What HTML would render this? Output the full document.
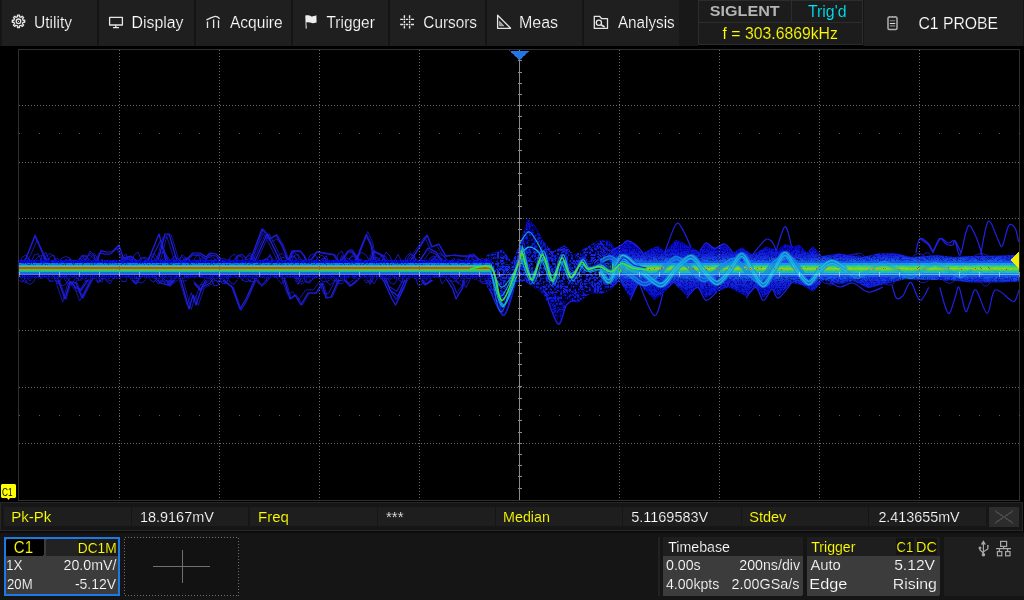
<!DOCTYPE html>
<html><head><meta charset="utf-8"><style>
html,body{margin:0;padding:0;width:1024px;height:600px;overflow:hidden;background:#000}
svg{display:block}
text{font-family:"Liberation Sans",sans-serif}
</style></head><body>
<svg width="1024" height="600" viewBox="0 0 1024 600" shape-rendering="crispEdges">
<rect x="0" y="0" width="1024" height="600" fill="#000" />
<rect x="0" y="0" width="698" height="46" fill="#151515" />
<rect x="2" y="0" width="95" height="46" fill="#1f1f1f" />
<text x="34.03" y="28" font-size="16" fill="#ffffff" text-anchor="start" font-weight="normal" stroke="#1f1f1f" stroke-width="0.2" textLength="38.08" lengthAdjust="spacingAndGlyphs" >Utility</text>
<rect x="99" y="0" width="95" height="46" fill="#1f1f1f" />
<text x="131.51" y="28" font-size="16" fill="#ffffff" text-anchor="start" font-weight="normal" stroke="#1f1f1f" stroke-width="0.2" textLength="51.96" lengthAdjust="spacingAndGlyphs" >Display</text>
<rect x="196" y="0" width="95" height="46" fill="#1f1f1f" />
<text x="230.0" y="28" font-size="16" fill="#ffffff" text-anchor="start" font-weight="normal" stroke="#1f1f1f" stroke-width="0.2" textLength="52.64" lengthAdjust="spacingAndGlyphs" >Acquire</text>
<rect x="293" y="0" width="95" height="46" fill="#1f1f1f" />
<text x="326.5" y="28" font-size="16" fill="#ffffff" text-anchor="start" font-weight="normal" stroke="#1f1f1f" stroke-width="0.2" textLength="48.29" lengthAdjust="spacingAndGlyphs" >Trigger</text>
<rect x="390" y="0" width="95" height="46" fill="#1f1f1f" />
<text x="423.3" y="28" font-size="16" fill="#ffffff" text-anchor="start" font-weight="normal" stroke="#1f1f1f" stroke-width="0.2" textLength="53.71" lengthAdjust="spacingAndGlyphs" >Cursors</text>
<rect x="487" y="0" width="95" height="46" fill="#1f1f1f" />
<text x="519.0" y="28" font-size="16" fill="#ffffff" text-anchor="start" font-weight="normal" stroke="#1f1f1f" stroke-width="0.2" textLength="39.12" lengthAdjust="spacingAndGlyphs" >Meas</text>
<rect x="584" y="0" width="95" height="46" fill="#1f1f1f" />
<text x="617.9" y="28" font-size="16" fill="#ffffff" text-anchor="start" font-weight="normal" stroke="#1f1f1f" stroke-width="0.2" textLength="56.85" lengthAdjust="spacingAndGlyphs" >Analysis</text>
<rect x="679" y="0" width="19" height="46" fill="#181818" />
<rect x="698" y="0" width="165" height="45" fill="#2c2c2c" />
<rect x="699" y="1" width="92" height="21" fill="#1c1c1c" />
<rect x="792" y="1" width="70" height="21" fill="#1c1c1c" />
<rect x="699" y="23" width="163" height="21" fill="#1c1c1c" />
<text x="709.8" y="16" font-size="15" fill="#b4b4b4" text-anchor="start" font-weight="bold"  textLength="69.82" lengthAdjust="spacingAndGlyphs" >SIGLENT</text>
<text x="808.0" y="17" font-size="16" fill="#00e8f8" text-anchor="start" font-weight="normal" stroke="#1c1c1c" stroke-width="0.15" textLength="38.51" lengthAdjust="spacingAndGlyphs" >Trig'd</text>
<text x="722.6" y="38.5" font-size="15.7" fill="#ffff00" text-anchor="start" font-weight="normal" stroke="#1c1c1c" stroke-width="0.15" textLength="115.29" lengthAdjust="spacingAndGlyphs" >f = 303.6869kHz</text>
<rect x="863" y="0" width="161" height="46" fill="#151515" />
<rect x="864" y="0" width="159" height="46" fill="#1f1f1f" />
<text x="918.5" y="29" font-size="16" fill="#ffffff" text-anchor="start" font-weight="normal" stroke="#1f1f1f" stroke-width="0.2" textLength="79.62" lengthAdjust="spacingAndGlyphs" >C1 PROBE</text>
<g shape-rendering="auto" fill="none" stroke="#e6e6e6" stroke-width="1.3" stroke-linejoin="round">
<path d="M23.10,20.34 L24.71,20.27 L24.71,22.33 L23.10,22.26 L22.43,23.87 L23.63,24.96 L22.16,26.43 L21.07,25.23 L19.46,25.90 L19.53,27.51 L17.47,27.51 L17.54,25.90 L15.93,25.23 L14.84,26.43 L13.37,24.96 L14.57,23.87 L13.90,22.26 L12.29,22.33 L12.29,20.27 L13.90,20.34 L14.57,18.73 L13.37,17.64 L14.84,16.17 L15.93,17.37 L17.54,16.70 L17.47,15.09 L19.53,15.09 L19.46,16.70 L21.07,17.37 L22.16,16.17 L23.63,17.64 L22.43,18.73Z"/>
<circle cx="18.5" cy="21.3" r="2.3"/>
<circle cx="18.5" cy="21.3" r="0.6" fill="#e6e6e6" stroke="none"/>
<rect x="109.6" y="17.4" width="12.8" height="7.6"/>
<path d="M115.8 25.2 V27.4 M113 27.6 H119" stroke-width="1.4"/>
<path d="M206.4 19.8 C210 18.8 213 16.2 215.6 16.3 C217.4 16.4 218.8 17.6 219.6 18.9"/>
<path d="M207.5 21.5 V28 M213.6 19.5 V28 M218.5 20.3 V28"/>
<path d="M305.3 15.6 C308 15 309.5 15.6 311 16.2 C312.5 16.8 314 16 316.4 15.3 L316.6 22.4 C314 23.2 312.5 23.6 311 22.8 C309.5 22.1 308 22 306.3 22.6 L306.8 28.4 L305.7 28.5 Z" fill="#eeeeee" stroke="none"/>
<path d="M404.4 15.2 V18.2 M404.4 18.9 V19.9 M404.4 20.8 V23.1 M404.4 24.0 V25.0 M404.4 25.8 V28.6 M409.6 15.2 V18.2 M409.6 18.9 V19.9 M409.6 20.8 V23.1 M409.6 24.0 V25.0 M409.6 25.8 V28.6 M400.2 19.4 H403.2 M403.9 19.4 H404.9 M405.8 19.4 H408.2 M409.1 19.4 H410.1 M411 19.4 H414 M400.2 24.5 H403.2 M403.9 24.5 H404.9 M405.8 24.5 H408.2 M409.1 24.5 H410.1 M411 24.5 H414 " stroke-width="1.4"/>
<path d="M497.6 15.3 V28.3 H510.6 Z"/>
<path d="M499.6 21.3 V25.8 H503.8 Z" fill="#9a9a9a" stroke="#bbbbbb" stroke-width="0.8"/>
<path d="M594.3 16.3 H599.5 L601.7 18.7 H607.5 V28.4 H594.3 Z"/>
<circle cx="598.9" cy="22.8" r="2.6"/>
<path d="M601 24.8 L604.6 27" stroke-width="1.6"/>
<rect x="888" y="17.1" width="9" height="12.3" rx="1.2" stroke="#b0b0b0" stroke-width="1.5"/>
<path d="M889.8 20.8 H895.2 M889.8 25.9 H895.2" stroke="#888" stroke-width="1.1"/>
<path d="M889.8 23.5 H895.2" stroke="#ddd" stroke-width="1.1"/>
<path d="M889.5 16.5 v0.6 M892.5 16.3 v0.8 M895.4 16.5 v0.6" stroke="#ccc" stroke-width="1"/>
</g>
<defs><linearGradient id="envg" gradientUnits="userSpaceOnUse" x1="0" y1="240" x2="0" y2="300"><stop offset="0.117" stop-color="#0a0ac8"/><stop offset="0.267" stop-color="#1424e0"/><stop offset="0.35" stop-color="#2060f0"/><stop offset="0.383" stop-color="#10b0e0"/><stop offset="0.425" stop-color="#30c8a0"/><stop offset="0.442" stop-color="#40d040"/><stop offset="0.458" stop-color="#90c818"/><stop offset="0.475" stop-color="#d09010"/><stop offset="0.492" stop-color="#80c820"/><stop offset="0.517" stop-color="#30d040"/><stop offset="0.55" stop-color="#10b0e0"/><stop offset="0.617" stop-color="#1a60ee"/><stop offset="0.70" stop-color="#1424e0"/><stop offset="1" stop-color="#0a0ac0"/></linearGradient><filter id="mott" x="0" y="0" width="1" height="1"><feTurbulence type="turbulence" baseFrequency="0.45" numOctaves="1" seed="3" result="n"/><feColorMatrix in="n" type="matrix" values="0 0 0 0 0  0 0 0 0 0  0 0 0 0 0  0 0 0 -6 0.8" result="m"/><feComposite in="m" in2="SourceGraphic" operator="in" result="mm"/><feMerge><feMergeNode in="SourceGraphic"/><feMergeNode in="mm"/></feMerge></filter><filter id="mott2" x="0" y="0" width="1" height="1"><feTurbulence type="turbulence" baseFrequency="0.35" numOctaves="1" seed="9" result="n"/><feColorMatrix in="n" type="matrix" values="0 0 0 0 0  0 0 0 0 0  0 0 0 0 0  0 0 0 -5 1.3" result="m"/><feComposite in="m" in2="SourceGraphic" operator="in" result="mm"/><feMerge><feMergeNode in="SourceGraphic"/><feMergeNode in="mm"/></feMerge></filter><filter id="holes" x="0" y="0" width="1" height="1"><feTurbulence type="turbulence" baseFrequency="0.5" numOctaves="1" seed="7" result="n"/><feColorMatrix in="n" type="matrix" values="0 0 0 0 0  0 0 0 0 0  0 0 0 0 0  0 0 0 -10 0.7"/></filter></defs>
<g shape-rendering="auto">
<defs><clipPath id="cA"><rect x="0" y="0" width="612" height="600"/></clipPath><clipPath id="cB"><rect x="612" y="0" width="500" height="600"/></clipPath><linearGradient id="envb" gradientUnits="userSpaceOnUse" x1="0" y1="220" x2="0" y2="320"><stop offset="0" stop-color="#0a0ac8"/><stop offset="0.5" stop-color="#1830e8"/><stop offset="1" stop-color="#0a0ac8"/></linearGradient></defs>
<g clip-path="url(#cA)"><polygon points="484,262 487,255 502.5,249.4 512,262.4 519.8,244 527.4,218 535,225.6 543,240.6 552.5,251.6 565,245 574,254.7 587,247 598,240.6 609,240.6 615,248.4 627.5,240.6 634.7,244 643,252.7 652,248.3 658.5,246 665,251.6 675.8,240 682.3,242 691,247.3 699.7,251.6 706,243 714.8,248.3 724.6,244 733,252.7 741.7,247.3 752.5,254.8 765.5,247 772,248 776.3,250.5 785,244 791.5,246 800,245 806.7,252.7 813,246 821.8,256.1 839,253.3 861.7,257.1 879,253.3 896.3,253.3 911.5,257.1 937.5,255.1 952.7,257.1 970,256.1 1000,255.4 1019,254.6 1019,281.8 1000,282.6 970,282.6 948.3,280.1 926.7,280.1 905,279.2 883.3,284.6 868.2,288.3 853,280.9 840,284.6 824,280.1 813,291.7 802.3,285.2 791.5,283 778.5,296 772,289.5 763.3,298 755.8,287.3 746,296 728.7,287.3 717,291.7 706,298 697.5,287.3 686.7,296 673.7,283 662.8,293.8 654.2,300 639,283 630.3,298 619.5,281 610.8,289.5 602.5,293.8 590,293.8 577.5,303 568,300 558.75,325 543,293.8 524.4,281 515,284 502.5,314 504.6,315.4 487.3,287.3 484,278" fill="url(#envb)" filter="url(#mott2)"/></g>
<g clip-path="url(#cB)"><polygon points="484,262 487,255 502.5,249.4 512,262.4 519.8,244 527.4,218 535,225.6 543,240.6 552.5,251.6 565,245 574,254.7 587,247 598,240.6 609,240.6 615,248.4 627.5,240.6 634.7,244 643,252.7 652,248.3 658.5,246 665,251.6 675.8,240 682.3,242 691,247.3 699.7,251.6 706,243 714.8,248.3 724.6,244 733,252.7 741.7,247.3 752.5,254.8 765.5,247 772,248 776.3,250.5 785,244 791.5,246 800,245 806.7,252.7 813,246 821.8,256.1 839,253.3 861.7,257.1 879,253.3 896.3,253.3 911.5,257.1 937.5,255.1 952.7,257.1 970,256.1 1000,255.4 1019,254.6 1019,281.8 1000,282.6 970,282.6 948.3,280.1 926.7,280.1 905,279.2 883.3,284.6 868.2,288.3 853,280.9 840,284.6 824,280.1 813,291.7 802.3,285.2 791.5,283 778.5,296 772,289.5 763.3,298 755.8,287.3 746,296 728.7,287.3 717,291.7 706,298 697.5,287.3 686.7,296 673.7,283 662.8,293.8 654.2,300 639,283 630.3,298 619.5,281 610.8,289.5 602.5,293.8 590,293.8 577.5,303 568,300 558.75,325 543,293.8 524.4,281 515,284 502.5,314 504.6,315.4 487.3,287.3 484,278" fill="url(#envg)" filter="url(#mott)"/></g>
<path d="M620.0,275.2 C621.0,273.7 624.0,269.0 626.0,266.3 C628.0,263.6 630.0,260.6 632.0,259.0 C634.0,257.4 636.0,256.4 638.0,256.5 C640.0,256.6 642.0,257.9 644.0,259.6 C646.0,261.3 648.0,264.1 650.0,266.5 C652.0,268.9 654.0,272.0 656.0,274.0 C658.0,276.0 660.0,277.8 662.0,278.5 C664.0,279.2 666.0,279.1 668.0,278.4 C670.0,277.7 672.0,275.9 674.0,274.2 C676.0,272.5 678.0,270.0 680.0,268.2 C682.0,266.4 684.0,264.4 686.0,263.4 C688.0,262.3 690.0,261.8 692.0,261.9 C694.0,262.0 696.0,263.0 698.0,264.0 C700.0,265.0 702.0,266.8 704.0,268.1 C706.0,269.4 708.0,271.0 710.0,271.9 C712.0,272.8 714.0,273.4 716.0,273.4 C718.0,273.4 720.0,272.8 722.0,272.1 C724.0,271.4 726.0,270.1 728.0,269.2 C730.0,268.3 732.0,267.1 734.0,266.5 C736.0,265.9 738.0,265.7 740.0,265.9 C742.0,266.1 744.0,266.9 746.0,267.7 C748.0,268.5 750.0,269.9 752.0,270.8 C754.0,271.7 756.0,272.8 758.0,273.2 C760.0,273.6 762.0,273.6 764.0,273.2 C766.0,272.8 768.0,271.7 770.0,270.5 C772.0,269.3 774.0,267.4 776.0,266.1 C778.0,264.8 780.0,263.2 782.0,262.5 C784.0,261.8 786.0,261.4 788.0,261.8 C790.0,262.2 792.0,263.4 794.0,264.9 C796.0,266.4 798.0,268.7 800.0,270.6 C802.0,272.5 804.0,275.1 806.0,276.5 C808.0,277.9 810.0,279.2 812.0,279.3 C814.0,279.4 816.0,278.7 818.0,277.4 C820.0,276.1 822.0,273.6 824.0,271.3 C826.0,269.0 828.0,265.7 830.0,263.4 C832.0,261.1 834.0,258.7 836.0,257.6 C838.0,256.5 840.0,256.0 842.0,256.6 C844.0,257.2 846.0,259.1 848.0,261.3 C850.0,263.5 852.0,267.0 854.0,269.8 C856.0,272.6 858.0,276.1 860.0,278.3 C862.0,280.5 864.0,282.4 866.0,282.9 C868.0,283.4 870.0,282.8 872.0,281.4 C874.0,279.9 876.0,277.0 878.0,274.2 C880.0,271.4 882.0,267.5 884.0,264.6 C886.0,261.7 888.0,258.6 890.0,256.9 C892.0,255.2 894.0,254.2 896.0,254.5 C898.0,254.8 900.0,256.4 902.0,258.5 C904.0,260.6 906.0,264.1 908.0,267.1 C910.0,270.1 912.0,273.8 914.0,276.3 C916.0,278.8 918.0,281.2 920.0,282.1 C922.0,283.0 924.0,282.9 926.0,281.9 C928.0,280.9 930.0,278.5 932.0,276.1 C934.0,273.7 936.0,270.2 938.0,267.5 C940.0,264.8 942.0,261.8 944.0,260.0 C946.0,258.2 948.0,257.1 950.0,257.0 C952.0,256.9 954.0,257.9 956.0,259.3 C958.0,260.8 960.0,263.4 962.0,265.7 C964.0,268.0 966.0,271.0 968.0,273.0 C970.0,275.0 972.0,276.8 974.0,277.7 C976.0,278.6 978.0,278.7 980.0,278.1 C982.0,277.5 984.0,275.9 986.0,274.3 C988.0,272.7 990.0,270.4 992.0,268.7 C994.0,267.0 996.0,265.1 998.0,264.1 C1000.0,263.1 1002.0,262.5 1004.0,262.5 C1006.0,262.5 1008.0,263.4 1010.0,264.3 C1012.0,265.2 1015.0,267.5 1016.0,268.1" fill="none" stroke="#1a1ad8" stroke-width="1.0" opacity="0.85"/>
<path d="M620.0,273.1 C621.0,273.2 624.0,273.8 626.0,273.8 C628.0,273.8 630.0,273.5 632.0,273.0 C634.0,272.5 636.0,271.7 638.0,271.0 C640.0,270.3 642.0,269.4 644.0,268.7 C646.0,268.0 648.0,267.4 650.0,267.0 C652.0,266.6 654.0,266.2 656.0,266.2 C658.0,266.1 660.0,266.4 662.0,266.7 C664.0,267.0 666.0,267.5 668.0,267.9 C670.0,268.3 672.0,268.9 674.0,269.3 C676.0,269.7 678.0,270.1 680.0,270.3 C682.0,270.5 684.0,270.5 686.0,270.4 C688.0,270.3 690.0,270.0 692.0,269.7 C694.0,269.4 696.0,268.8 698.0,268.4 C700.0,268.0 702.0,267.6 704.0,267.3 C706.0,267.1 708.0,266.9 710.0,266.9 C712.0,266.9 714.0,267.1 716.0,267.5 C718.0,267.9 720.0,268.4 722.0,269.0 C724.0,269.6 726.0,270.3 728.0,270.9 C730.0,271.5 732.0,272.1 734.0,272.5 C736.0,272.9 738.0,273.2 740.0,273.1 C742.0,273.1 744.0,272.7 746.0,272.2 C748.0,271.7 750.0,270.9 752.0,270.0 C754.0,269.1 756.0,267.9 758.0,267.0 C760.0,266.1 762.0,265.1 764.0,264.4 C766.0,263.7 768.0,263.1 770.0,262.9 C772.0,262.7 774.0,262.9 776.0,263.4 C778.0,263.9 780.0,264.7 782.0,265.7 C784.0,266.7 786.0,268.1 788.0,269.3 C790.0,270.6 792.0,272.1 794.0,273.2 C796.0,274.3 798.0,275.4 800.0,276.0 C802.0,276.6 804.0,277.0 806.0,276.9 C808.0,276.8 810.0,276.2 812.0,275.3 C814.0,274.4 816.0,273.0 818.0,271.6 C820.0,270.2 822.0,268.5 824.0,267.0 C826.0,265.5 828.0,263.8 830.0,262.7 C832.0,261.6 834.0,260.6 836.0,260.2 C838.0,259.8 840.0,259.8 842.0,260.3 C844.0,260.8 846.0,261.8 848.0,263.0 C850.0,264.2 852.0,266.1 854.0,267.7 C856.0,269.3 858.0,271.3 860.0,272.8 C862.0,274.3 864.0,275.9 866.0,276.9 C868.0,277.9 870.0,278.5 872.0,278.6 C874.0,278.7 876.0,278.3 878.0,277.5 C880.0,276.7 882.0,275.2 884.0,273.8 C886.0,272.4 888.0,270.5 890.0,268.8 C892.0,267.1 894.0,265.2 896.0,263.8 C898.0,262.4 900.0,261.1 902.0,260.4 C904.0,259.7 906.0,259.4 908.0,259.6 C910.0,259.8 912.0,260.6 914.0,261.6 C916.0,262.6 918.0,264.3 920.0,265.8 C922.0,267.3 924.0,269.3 926.0,270.8 C928.0,272.3 930.0,273.9 932.0,275.0 C934.0,276.1 936.0,277.0 938.0,277.4 C940.0,277.8 942.0,277.6 944.0,277.1 C946.0,276.6 948.0,275.6 950.0,274.5 C952.0,273.4 954.0,271.8 956.0,270.4 C958.0,269.0 960.0,267.4 962.0,266.2 C964.0,265.0 966.0,263.7 968.0,263.0 C970.0,262.3 972.0,261.9 974.0,261.9 C976.0,261.9 978.0,262.4 980.0,263.0 C982.0,263.6 984.0,264.7 986.0,265.7 C988.0,266.7 990.0,268.1 992.0,269.2 C994.0,270.3 996.0,271.4 998.0,272.2 C1000.0,273.0 1002.0,273.6 1004.0,273.9 C1006.0,274.2 1008.0,274.1 1010.0,273.9 C1012.0,273.6 1015.0,272.6 1016.0,272.4" fill="none" stroke="#1a1ad8" stroke-width="1.0" opacity="0.85"/>
<path d="M620.0,254.1 C621.0,254.2 624.0,254.0 626.0,255.0 C628.0,256.0 630.0,257.9 632.0,259.9 C634.0,261.9 636.0,264.6 638.0,267.1 C640.0,269.6 642.0,272.6 644.0,274.8 C646.0,277.1 648.0,279.2 650.0,280.6 C652.0,282.0 654.0,282.8 656.0,282.9 C658.0,283.0 660.0,282.4 662.0,281.3 C664.0,280.2 666.0,278.3 668.0,276.3 C670.0,274.3 672.0,271.7 674.0,269.4 C676.0,267.1 678.0,264.6 680.0,262.6 C682.0,260.7 684.0,258.8 686.0,257.7 C688.0,256.6 690.0,256.2 692.0,256.3 C694.0,256.4 696.0,257.2 698.0,258.4 C700.0,259.6 702.0,261.6 704.0,263.5 C706.0,265.4 708.0,267.8 710.0,269.9 C712.0,272.0 714.0,274.3 716.0,275.9 C718.0,277.5 720.0,279.0 722.0,279.7 C724.0,280.4 726.0,280.6 728.0,280.3 C730.0,280.0 732.0,279.0 734.0,277.7 C736.0,276.4 738.0,274.5 740.0,272.7 C742.0,270.9 744.0,268.7 746.0,266.9 C748.0,265.1 750.0,263.2 752.0,261.9 C754.0,260.6 756.0,259.5 758.0,259.1 C760.0,258.7 762.0,258.8 764.0,259.3 C766.0,259.8 768.0,260.9 770.0,262.2 C772.0,263.5 774.0,265.4 776.0,267.0 C778.0,268.6 780.0,270.6 782.0,272.1 C784.0,273.6 786.0,275.1 788.0,276.1 C790.0,277.1 792.0,277.8 794.0,277.9 C796.0,278.0 798.0,277.7 800.0,277.0 C802.0,276.3 804.0,275.1 806.0,273.8 C808.0,272.5 810.0,270.8 812.0,269.4 C814.0,267.9 816.0,266.3 818.0,265.1 C820.0,263.9 822.0,262.7 824.0,262.1 C826.0,261.5 828.0,261.2 830.0,261.3 C832.0,261.4 834.0,262.1 836.0,262.9 C838.0,263.7 840.0,264.9 842.0,266.1 C844.0,267.3 846.0,268.9 848.0,270.1 C850.0,271.3 852.0,272.6 854.0,273.5 C856.0,274.4 858.0,275.1 860.0,275.4 C862.0,275.7 864.0,275.6 866.0,275.2 C868.0,274.8 870.0,274.1 872.0,273.2 C874.0,272.3 876.0,271.1 878.0,270.0 C880.0,268.9 882.0,267.6 884.0,266.6 C886.0,265.6 888.0,264.7 890.0,264.2 C892.0,263.7 894.0,263.4 896.0,263.4 C898.0,263.4 900.0,263.8 902.0,264.4 C904.0,265.0 906.0,265.9 908.0,266.8 C910.0,267.7 912.0,268.9 914.0,269.9 C916.0,270.8 918.0,271.8 920.0,272.5 C922.0,273.2 924.0,273.7 926.0,273.9 C928.0,274.1 930.0,274.0 932.0,273.7 C934.0,273.4 936.0,272.6 938.0,271.9 C940.0,271.1 942.0,270.1 944.0,269.2 C946.0,268.3 948.0,267.2 950.0,266.4 C952.0,265.6 954.0,265.0 956.0,264.6 C958.0,264.2 960.0,264.1 962.0,264.2 C964.0,264.3 966.0,264.9 968.0,265.5 C970.0,266.1 972.0,267.1 974.0,268.0 C976.0,268.9 978.0,269.9 980.0,270.8 C982.0,271.7 984.0,272.6 986.0,273.2 C988.0,273.8 990.0,274.1 992.0,274.1 C994.0,274.1 996.0,273.9 998.0,273.4 C1000.0,272.9 1002.0,272.1 1004.0,271.2 C1006.0,270.3 1008.0,269.1 1010.0,268.1 C1012.0,267.1 1015.0,265.7 1016.0,265.2" fill="none" stroke="#1a1ad8" stroke-width="1.0" opacity="0.85"/>
<path d="M620.0,278.2 C621.0,278.4 624.0,279.8 626.0,279.1 C628.0,278.5 630.0,276.5 632.0,274.3 C634.0,272.1 636.0,268.6 638.0,266.2 C640.0,263.8 642.0,261.0 644.0,259.7 C646.0,258.4 648.0,257.9 650.0,258.4 C652.0,258.9 654.0,260.9 656.0,262.8 C658.0,264.7 660.0,267.8 662.0,269.8 C664.0,271.8 666.0,274.0 668.0,274.8 C670.0,275.6 672.0,275.6 674.0,274.7 C676.0,273.8 678.0,271.6 680.0,269.7 C682.0,267.8 684.0,264.9 686.0,263.3 C688.0,261.7 690.0,260.2 692.0,260.1 C694.0,260.0 696.0,260.9 698.0,262.5 C700.0,264.1 702.0,267.1 704.0,269.5 C706.0,271.9 708.0,275.1 710.0,277.0 C712.0,278.9 714.0,280.4 716.0,280.6 C718.0,280.8 720.0,279.8 722.0,278.2 C724.0,276.6 726.0,273.6 728.0,271.3 C730.0,269.0 732.0,265.9 734.0,264.3 C736.0,262.7 738.0,261.5 740.0,261.5 C742.0,261.5 744.0,262.7 746.0,264.2 C748.0,265.7 750.0,268.4 752.0,270.3 C754.0,272.2 756.0,274.6 758.0,275.5 C760.0,276.4 762.0,276.7 764.0,275.9 C766.0,275.1 768.0,273.0 770.0,270.9 C772.0,268.8 774.0,265.5 776.0,263.4 C778.0,261.3 780.0,259.0 782.0,258.1 C784.0,257.2 786.0,257.3 788.0,258.3 C790.0,259.3 792.0,261.7 794.0,264.0 C796.0,266.3 798.0,269.7 800.0,271.9 C802.0,274.1 804.0,276.5 806.0,277.4 C808.0,278.3 810.0,278.2 812.0,277.3 C814.0,276.4 816.0,274.1 818.0,272.2 C820.0,270.3 822.0,267.4 824.0,265.8 C826.0,264.2 828.0,262.8 830.0,262.6 C832.0,262.4 834.0,263.4 836.0,264.8 C838.0,266.2 840.0,269.1 842.0,271.2 C844.0,273.3 846.0,276.2 848.0,277.6 C850.0,279.0 852.0,280.0 854.0,279.7 C856.0,279.4 858.0,277.8 860.0,275.9 C862.0,274.0 864.0,270.6 866.0,268.1 C868.0,265.6 870.0,262.5 872.0,260.9 C874.0,259.3 876.0,258.4 878.0,258.5 C880.0,258.6 882.0,260.1 884.0,261.8 C886.0,263.5 888.0,266.5 890.0,268.6 C892.0,270.7 894.0,273.1 896.0,274.2 C898.0,275.3 900.0,275.6 902.0,275.0 C904.0,274.4 906.0,272.4 908.0,270.6 C910.0,268.8 912.0,265.9 914.0,264.1 C916.0,262.3 918.0,260.4 920.0,259.9 C922.0,259.4 924.0,260.0 926.0,261.3 C928.0,262.6 930.0,265.3 932.0,267.7 C934.0,270.1 936.0,273.5 938.0,275.6 C940.0,277.7 942.0,279.7 944.0,280.3 C946.0,280.9 948.0,280.2 950.0,279.0 C952.0,277.8 954.0,275.0 956.0,272.8 C958.0,270.6 960.0,267.4 962.0,265.6 C964.0,263.8 966.0,262.1 968.0,261.8 C970.0,261.5 972.0,262.3 974.0,263.6 C976.0,264.9 978.0,267.6 980.0,269.5 C982.0,271.4 984.0,273.9 986.0,275.1 C988.0,276.3 990.0,276.9 992.0,276.5 C994.0,276.1 996.0,274.3 998.0,272.4 C1000.0,270.5 1002.0,267.2 1004.0,264.9 C1006.0,262.6 1008.0,259.9 1010.0,258.7 C1012.0,257.5 1015.0,257.8 1016.0,257.6" fill="none" stroke="#1a1ad8" stroke-width="1.0" opacity="0.85"/>
<path d="M620.0,274.2 C621.0,275.2 624.0,278.5 626.0,280.0 C628.0,281.5 630.0,282.8 632.0,283.3 C634.0,283.9 636.0,283.8 638.0,283.3 C640.0,282.8 642.0,281.5 644.0,280.1 C646.0,278.7 648.0,276.8 650.0,275.1 C652.0,273.4 654.0,271.4 656.0,269.8 C658.0,268.2 660.0,266.7 662.0,265.8 C664.0,264.9 666.0,264.3 668.0,264.2 C670.0,264.1 672.0,264.5 674.0,265.1 C676.0,265.7 678.0,266.7 680.0,267.6 C682.0,268.5 684.0,269.8 686.0,270.5 C688.0,271.2 690.0,271.9 692.0,272.1 C694.0,272.3 696.0,272.1 698.0,271.5 C700.0,270.9 702.0,269.7 704.0,268.4 C706.0,267.1 708.0,265.4 710.0,263.8 C712.0,262.2 714.0,260.4 716.0,259.1 C718.0,257.8 720.0,256.5 722.0,255.9 C724.0,255.3 726.0,255.2 728.0,255.6 C730.0,256.0 732.0,257.1 734.0,258.5 C736.0,259.9 738.0,262.0 740.0,264.1 C742.0,266.2 744.0,268.8 746.0,271.0 C748.0,273.2 750.0,275.5 752.0,277.2 C754.0,278.9 756.0,280.4 758.0,281.2 C760.0,282.0 762.0,282.3 764.0,282.1 C766.0,281.9 768.0,281.1 770.0,280.0 C772.0,278.9 774.0,277.3 776.0,275.8 C778.0,274.3 780.0,272.5 782.0,271.1 C784.0,269.7 786.0,268.4 788.0,267.6 C790.0,266.8 792.0,266.4 794.0,266.3 C796.0,266.2 798.0,266.7 800.0,267.3 C802.0,267.9 804.0,269.1 806.0,270.0 C808.0,270.9 810.0,272.1 812.0,272.8 C814.0,273.5 816.0,274.3 818.0,274.4 C820.0,274.5 822.0,274.3 824.0,273.6 C826.0,272.9 828.0,271.6 830.0,270.2 C832.0,268.8 834.0,266.8 836.0,265.0 C838.0,263.2 840.0,261.1 842.0,259.5 C844.0,257.9 846.0,256.3 848.0,255.4 C850.0,254.5 852.0,254.0 854.0,254.1 C856.0,254.2 858.0,254.9 860.0,256.1 C862.0,257.3 864.0,259.2 866.0,261.1 C868.0,263.0 870.0,265.5 872.0,267.7 C874.0,269.9 876.0,272.3 878.0,274.1 C880.0,275.9 882.0,277.5 884.0,278.5 C886.0,279.5 888.0,280.1 890.0,280.1 C892.0,280.1 894.0,279.5 896.0,278.7 C898.0,277.9 900.0,276.5 902.0,275.3 C904.0,274.1 906.0,272.5 908.0,271.4 C910.0,270.2 912.0,269.0 914.0,268.4 C916.0,267.8 918.0,267.5 920.0,267.6 C922.0,267.7 924.0,268.3 926.0,269.0 C928.0,269.7 930.0,271.0 932.0,272.0 C934.0,273.0 936.0,274.4 938.0,275.2 C940.0,276.0 942.0,276.8 944.0,277.0 C946.0,277.2 948.0,277.0 950.0,276.3 C952.0,275.6 954.0,274.3 956.0,272.8 C958.0,271.3 960.0,269.2 962.0,267.2 C964.0,265.2 966.0,262.9 968.0,261.0 C970.0,259.1 972.0,257.2 974.0,256.0 C976.0,254.8 978.0,253.8 980.0,253.6 C982.0,253.4 984.0,253.8 986.0,254.7 C988.0,255.6 990.0,257.1 992.0,258.8 C994.0,260.5 996.0,262.8 998.0,264.8 C1000.0,266.8 1002.0,269.2 1004.0,271.0 C1006.0,272.8 1008.0,274.5 1010.0,275.6 C1012.0,276.7 1015.0,277.2 1016.0,277.5" fill="none" stroke="#1a1ad8" stroke-width="1.0" opacity="0.85"/>
<path d="M620.0,274.5 C621.0,275.4 624.0,278.9 626.0,279.8 C628.0,280.7 630.0,280.8 632.0,280.1 C634.0,279.4 636.0,277.5 638.0,275.6 C640.0,273.7 642.0,270.9 644.0,268.9 C646.0,266.9 648.0,264.7 650.0,263.5 C652.0,262.3 654.0,261.7 656.0,261.8 C658.0,261.9 660.0,263.1 662.0,264.3 C664.0,265.5 666.0,267.6 668.0,269.0 C670.0,270.4 672.0,272.1 674.0,272.8 C676.0,273.5 678.0,273.7 680.0,273.2 C682.0,272.7 684.0,271.4 686.0,270.0 C688.0,268.6 690.0,266.4 692.0,265.0 C694.0,263.6 696.0,261.9 698.0,261.4 C700.0,260.8 702.0,260.9 704.0,261.7 C706.0,262.5 708.0,264.4 710.0,266.4 C712.0,268.3 714.0,271.2 716.0,273.4 C718.0,275.5 720.0,278.1 722.0,279.3 C724.0,280.6 726.0,281.2 728.0,280.9 C730.0,280.6 732.0,279.1 734.0,277.3 C736.0,275.5 738.0,272.4 740.0,269.9 C742.0,267.4 744.0,264.3 746.0,262.3 C748.0,260.3 750.0,258.6 752.0,258.0 C754.0,257.4 756.0,257.7 758.0,258.7 C760.0,259.7 762.0,261.9 764.0,263.9 C766.0,265.8 768.0,268.5 770.0,270.4 C772.0,272.2 774.0,274.1 776.0,275.0 C778.0,275.9 780.0,276.0 782.0,275.5 C784.0,275.0 786.0,273.5 788.0,272.2 C790.0,270.9 792.0,268.8 794.0,267.5 C796.0,266.2 798.0,265.0 800.0,264.6 C802.0,264.2 804.0,264.5 806.0,265.3 C808.0,266.1 810.0,267.9 812.0,269.4 C814.0,270.9 816.0,273.2 818.0,274.5 C820.0,275.8 822.0,277.2 824.0,277.4 C826.0,277.6 828.0,277.1 830.0,275.9 C832.0,274.7 834.0,272.4 836.0,270.3 C838.0,268.2 840.0,265.2 842.0,263.1 C844.0,261.0 846.0,258.8 848.0,257.8 C850.0,256.8 852.0,256.6 854.0,257.3 C856.0,258.0 858.0,259.8 860.0,261.9 C862.0,263.9 864.0,267.1 866.0,269.6 C868.0,272.1 870.0,275.1 872.0,276.8 C874.0,278.5 876.0,279.8 878.0,280.0 C880.0,280.2 882.0,279.4 884.0,278.2 C886.0,277.0 888.0,274.6 890.0,272.6 C892.0,270.6 894.0,268.0 896.0,266.4 C898.0,264.8 900.0,263.4 902.0,262.9 C904.0,262.4 906.0,262.8 908.0,263.5 C910.0,264.2 912.0,265.9 914.0,267.3 C916.0,268.7 918.0,270.6 920.0,271.7 C922.0,272.8 924.0,273.7 926.0,273.7 C928.0,273.7 930.0,273.0 932.0,271.9 C934.0,270.8 936.0,268.7 938.0,267.1 C940.0,265.5 942.0,263.3 944.0,262.1 C946.0,260.9 948.0,260.0 950.0,260.1 C952.0,260.2 954.0,261.2 956.0,262.7 C958.0,264.2 960.0,266.8 962.0,269.1 C964.0,271.4 966.0,274.4 968.0,276.4 C970.0,278.4 972.0,280.2 974.0,280.9 C976.0,281.5 978.0,281.3 980.0,280.3 C982.0,279.3 984.0,276.9 986.0,274.7 C988.0,272.5 990.0,269.3 992.0,266.9 C994.0,264.5 996.0,261.8 998.0,260.4 C1000.0,259.0 1002.0,258.2 1004.0,258.3 C1006.0,258.4 1008.0,259.7 1010.0,261.1 C1012.0,262.5 1015.0,265.9 1016.0,266.9" fill="none" stroke="#1a1ad8" stroke-width="1.0" opacity="0.85"/>
<path d="M620.0,278.2 C621.0,277.6 624.0,276.3 626.0,274.6 C628.0,272.9 630.0,269.6 632.0,267.9 C634.0,266.2 636.0,264.6 638.0,264.4 C640.0,264.2 642.0,265.4 644.0,266.6 C646.0,267.8 648.0,270.4 650.0,271.5 C652.0,272.6 654.0,273.7 656.0,273.4 C658.0,273.1 660.0,271.4 662.0,269.7 C664.0,268.0 666.0,264.8 668.0,263.2 C670.0,261.6 672.0,259.9 674.0,260.0 C676.0,260.1 678.0,261.8 680.0,263.9 C682.0,266.0 684.0,269.9 686.0,272.5 C688.0,275.1 690.0,278.2 692.0,279.2 C694.0,280.2 696.0,280.0 698.0,278.7 C700.0,277.4 702.0,274.0 704.0,271.5 C706.0,269.0 708.0,265.4 710.0,263.7 C712.0,262.0 714.0,260.9 716.0,261.1 C718.0,261.3 720.0,263.4 722.0,265.0 C724.0,266.6 726.0,269.5 728.0,270.8 C730.0,272.1 732.0,273.0 734.0,272.8 C736.0,272.6 738.0,270.8 740.0,269.4 C742.0,268.0 744.0,265.5 746.0,264.6 C748.0,263.7 750.0,263.2 752.0,263.9 C754.0,264.6 756.0,266.9 758.0,269.0 C760.0,271.1 762.0,274.5 764.0,276.2 C766.0,277.9 768.0,279.3 770.0,279.0 C772.0,278.7 774.0,276.6 776.0,274.3 C778.0,272.0 780.0,267.9 782.0,265.4 C784.0,262.8 786.0,259.9 788.0,259.0 C790.0,258.1 792.0,258.7 794.0,260.0 C796.0,261.3 798.0,264.6 800.0,266.9 C802.0,269.2 804.0,272.5 806.0,273.9 C808.0,275.3 810.0,275.8 812.0,275.3 C814.0,274.8 816.0,272.6 818.0,271.1 C820.0,269.6 822.0,267.2 824.0,266.3 C826.0,265.4 828.0,265.2 830.0,265.9 C832.0,266.6 834.0,268.8 836.0,270.4 C838.0,271.9 840.0,274.4 842.0,275.2 C844.0,275.9 846.0,276.0 848.0,274.9 C850.0,273.8 852.0,270.8 854.0,268.5 C856.0,266.2 858.0,262.6 860.0,260.9 C862.0,259.2 864.0,257.9 866.0,258.4 C868.0,258.8 870.0,261.2 872.0,263.6 C874.0,266.0 876.0,270.1 878.0,272.6 C880.0,275.1 882.0,277.7 884.0,278.4 C886.0,279.1 888.0,278.3 890.0,277.0 C892.0,275.7 894.0,272.5 896.0,270.4 C898.0,268.3 900.0,265.6 902.0,264.6 C904.0,263.6 906.0,263.7 908.0,264.4 C910.0,265.1 912.0,267.5 914.0,268.9 C916.0,270.3 918.0,272.4 920.0,272.8 C922.0,273.2 924.0,272.6 926.0,271.5 C928.0,270.4 930.0,267.6 932.0,265.9 C934.0,264.2 936.0,261.7 938.0,261.1 C940.0,260.5 942.0,261.0 944.0,262.4 C946.0,263.8 948.0,267.1 950.0,269.7 C952.0,272.2 954.0,276.0 956.0,277.7 C958.0,279.4 960.0,280.4 962.0,279.8 C964.0,279.2 966.0,276.7 968.0,274.3 C970.0,271.9 972.0,267.9 974.0,265.6 C976.0,263.3 978.0,261.0 980.0,260.5 C982.0,260.0 984.0,261.0 986.0,262.4 C988.0,263.8 990.0,266.8 992.0,268.6 C994.0,270.4 996.0,272.5 998.0,273.0 C1000.0,273.5 1002.0,272.8 1004.0,271.8 C1006.0,270.8 1008.0,268.3 1010.0,267.0 C1012.0,265.7 1015.0,264.6 1016.0,264.1" fill="none" stroke="#1a1ad8" stroke-width="1.0" opacity="0.85"/>
<path d="M620.0,262.7 C621.0,262.1 624.0,259.6 626.0,259.1 C628.0,258.6 630.0,258.9 632.0,259.7 C634.0,260.5 636.0,262.2 638.0,263.9 C640.0,265.6 642.0,268.0 644.0,269.8 C646.0,271.6 648.0,273.7 650.0,274.9 C652.0,276.1 654.0,277.0 656.0,277.2 C658.0,277.4 660.0,276.8 662.0,275.8 C664.0,274.9 666.0,273.1 668.0,271.5 C670.0,269.9 672.0,267.8 674.0,266.4 C676.0,264.9 678.0,263.5 680.0,262.8 C682.0,262.1 684.0,261.8 686.0,262.1 C688.0,262.4 690.0,263.4 692.0,264.6 C694.0,265.8 696.0,267.8 698.0,269.3 C700.0,270.8 702.0,272.6 704.0,273.8 C706.0,275.0 708.0,276.0 710.0,276.3 C712.0,276.6 714.0,276.2 716.0,275.4 C718.0,274.6 720.0,273.0 722.0,271.4 C724.0,269.8 726.0,267.6 728.0,266.0 C730.0,264.4 732.0,262.6 734.0,261.6 C736.0,260.6 738.0,260.0 740.0,260.1 C742.0,260.2 744.0,261.2 746.0,262.5 C748.0,263.8 750.0,265.9 752.0,267.9 C754.0,269.9 756.0,272.4 758.0,274.3 C760.0,276.2 762.0,278.1 764.0,279.0 C766.0,279.9 768.0,280.2 770.0,279.8 C772.0,279.4 774.0,278.0 776.0,276.3 C778.0,274.6 780.0,271.9 782.0,269.5 C784.0,267.1 786.0,264.2 788.0,262.1 C790.0,260.0 792.0,257.9 794.0,256.9 C796.0,255.9 798.0,255.6 800.0,256.2 C802.0,256.8 804.0,258.4 806.0,260.4 C808.0,262.4 810.0,265.6 812.0,268.3 C814.0,271.0 816.0,274.4 818.0,276.8 C820.0,279.2 822.0,281.6 824.0,282.7 C826.0,283.8 828.0,284.1 830.0,283.5 C832.0,282.9 834.0,281.1 836.0,278.9 C838.0,276.7 840.0,273.3 842.0,270.4 C844.0,267.4 846.0,263.8 848.0,261.2 C850.0,258.6 852.0,255.9 854.0,254.6 C856.0,253.3 858.0,252.9 860.0,253.4 C862.0,253.9 864.0,255.7 866.0,257.9 C868.0,260.1 870.0,263.5 872.0,266.6 C874.0,269.7 876.0,273.5 878.0,276.3 C880.0,279.1 882.0,281.8 884.0,283.2 C886.0,284.6 888.0,285.4 890.0,285.0 C892.0,284.6 894.0,282.9 896.0,280.8 C898.0,278.7 900.0,275.3 902.0,272.3 C904.0,269.3 906.0,265.6 908.0,262.8 C910.0,260.0 912.0,257.1 914.0,255.6 C916.0,254.1 918.0,253.3 920.0,253.6 C922.0,253.9 924.0,255.3 926.0,257.2 C928.0,259.1 930.0,262.3 932.0,265.1 C934.0,267.9 936.0,271.5 938.0,274.1 C940.0,276.7 942.0,279.4 944.0,280.9 C946.0,282.4 948.0,283.3 950.0,283.1 C952.0,282.9 954.0,281.6 956.0,279.9 C958.0,278.2 960.0,275.4 962.0,272.9 C964.0,270.4 966.0,267.2 968.0,264.8 C970.0,262.4 972.0,260.0 974.0,258.7 C976.0,257.4 978.0,256.7 980.0,256.9 C982.0,257.1 984.0,258.2 986.0,259.7 C988.0,261.2 990.0,263.7 992.0,265.9 C994.0,268.1 996.0,270.8 998.0,272.8 C1000.0,274.8 1002.0,276.7 1004.0,277.7 C1006.0,278.7 1008.0,279.2 1010.0,278.9 C1012.0,278.6 1015.0,276.5 1016.0,276.0" fill="none" stroke="#1a1ad8" stroke-width="1.0" opacity="0.85"/>
<path d="M620.0,254.4 C621.0,255.8 624.0,259.9 626.0,263.0 C628.0,266.1 630.0,271.1 632.0,273.2 C634.0,275.3 636.0,276.5 638.0,275.7 C640.0,274.9 642.0,271.4 644.0,268.4 C646.0,265.4 648.0,260.3 650.0,257.9 C652.0,255.5 654.0,253.5 656.0,254.0 C658.0,254.5 660.0,257.5 662.0,260.7 C664.0,263.9 666.0,269.8 668.0,273.3 C670.0,276.8 672.0,280.6 674.0,281.7 C676.0,282.8 678.0,281.7 680.0,279.8 C682.0,277.9 684.0,273.0 686.0,270.1 C688.0,267.2 690.0,263.3 692.0,262.2 C694.0,261.1 696.0,261.6 698.0,263.5 C700.0,265.4 702.0,270.2 704.0,273.5 C706.0,276.8 708.0,281.6 710.0,283.5 C712.0,285.4 714.0,286.2 716.0,284.9 C718.0,283.6 720.0,279.4 722.0,275.9 C724.0,272.4 726.0,266.7 728.0,263.8 C730.0,260.9 732.0,258.4 734.0,258.3 C736.0,258.2 738.0,260.7 740.0,263.2 C742.0,265.7 744.0,270.6 746.0,273.1 C748.0,275.6 750.0,278.3 752.0,278.4 C754.0,278.4 756.0,276.2 758.0,273.4 C760.0,270.6 762.0,265.1 764.0,261.7 C766.0,258.3 768.0,254.1 770.0,252.8 C772.0,251.5 774.0,252.2 776.0,254.1 C778.0,256.0 780.0,260.9 782.0,264.4 C784.0,267.9 786.0,272.8 788.0,274.9 C790.0,277.0 792.0,277.8 794.0,276.9 C796.0,276.0 798.0,272.1 800.0,269.3 C802.0,266.5 804.0,261.8 806.0,259.8 C808.0,257.8 810.0,256.5 812.0,257.5 C814.0,258.5 816.0,262.3 818.0,265.7 C820.0,269.1 822.0,274.9 824.0,278.1 C826.0,281.3 828.0,284.5 830.0,285.0 C832.0,285.5 834.0,283.6 836.0,281.1 C838.0,278.7 840.0,273.4 842.0,270.3 C844.0,267.2 846.0,263.4 848.0,262.4 C850.0,261.4 852.0,262.3 854.0,264.2 C856.0,266.1 858.0,270.9 860.0,273.9 C862.0,276.9 864.0,281.1 866.0,282.4 C868.0,283.7 870.0,283.5 872.0,281.6 C874.0,279.7 876.0,274.9 878.0,271.2 C880.0,267.5 882.0,261.9 884.0,259.2 C886.0,256.5 888.0,254.7 890.0,255.0 C892.0,255.3 894.0,258.5 896.0,261.3 C898.0,264.1 900.0,269.1 902.0,271.6 C904.0,274.1 906.0,276.4 908.0,276.3 C910.0,276.2 912.0,273.6 914.0,270.8 C916.0,268.0 918.0,262.7 920.0,259.7 C922.0,256.7 924.0,253.3 926.0,252.8 C928.0,252.3 930.0,253.9 932.0,256.5 C934.0,259.1 936.0,264.5 938.0,268.2 C940.0,271.9 942.0,276.6 944.0,278.5 C946.0,280.4 948.0,280.7 950.0,279.5 C952.0,278.3 954.0,274.3 956.0,271.4 C958.0,268.5 960.0,263.9 962.0,262.2 C964.0,260.5 966.0,259.8 968.0,261.1 C970.0,262.4 972.0,266.4 974.0,269.8 C976.0,273.2 978.0,278.6 980.0,281.3 C982.0,284.0 984.0,286.3 986.0,286.1 C988.0,285.9 990.0,283.0 992.0,280.0 C994.0,277.0 996.0,271.4 998.0,268.1 C1000.0,264.8 1002.0,261.3 1004.0,260.4 C1006.0,259.5 1008.0,260.8 1010.0,262.8 C1012.0,264.8 1015.0,270.7 1016.0,272.3" fill="none" stroke="#1a1ad8" stroke-width="1.0" opacity="0.85"/>
<path d="M665.0,251.6 C666.8,247.1 672.9,228.3 675.8,224.5 C678.7,220.7 679.8,225.0 682.3,228.8 C684.8,232.6 689.5,244.2 691.0,247.3" fill="none" stroke="#2020e8" stroke-width="1.2" />
<path d="M776.3,250.5 C777.8,246.5 782.5,227.4 785.0,226.7 C787.5,225.9 790.4,242.8 791.5,246.0" fill="none" stroke="#2020e8" stroke-width="1.2" />
<path d="M752.5,254.8 C754.7,252.3 762.2,241.9 765.5,239.7 C768.8,237.5 770.2,240.0 772.0,241.8 C773.8,243.6 775.6,249.1 776.3,250.5" fill="none" stroke="#2020e8" stroke-width="1.2" />
<path d="M639.0,283.0 C641.5,288.4 650.2,313.7 654.2,315.5 C658.2,317.3 661.4,297.4 662.8,293.8" fill="none" stroke="#2020e8" stroke-width="1.2" />
<path d="M545.0,291.7 C547.2,297.1 554.4,321.8 558.0,324.0 C561.6,326.2 563.8,308.7 566.7,304.7 C569.6,300.7 573.9,300.8 575.3,300.0" fill="none" stroke="#2020e8" stroke-width="1.2" />
<path d="M490.0,290.0 C492.3,294.2 499.6,316.3 503.8,315.5 C508.0,314.7 513.1,290.1 515.0,285.0" fill="none" stroke="#2020e8" stroke-width="1.2" />
<path d="M915.8,252.7 C916.5,250.3 917.8,240.0 920.0,238.6 C922.2,237.2 926.6,241.7 928.8,244.0 C931.0,246.3 932.3,251.2 933.0,252.7" fill="none" stroke="#2020e8" stroke-width="1.2" />
<path d="M933.0,252.7 C934.1,250.3 937.5,240.0 939.7,238.6 C941.9,237.2 943.8,242.9 946.0,244.0 C948.2,245.1 951.2,245.5 952.7,245.0 C954.2,244.5 953.8,239.1 955.0,240.8 C956.2,242.5 958.2,256.3 960.0,255.0 C961.8,253.7 964.1,237.9 965.7,233.0 C967.3,228.1 968.0,224.8 969.8,225.6 C971.6,226.3 974.1,232.3 976.3,237.5 C978.5,242.7 981.7,253.8 982.8,257.0" fill="none" stroke="#2020e8" stroke-width="1.2" />
<path d="M980.7,254.8 C982.0,249.2 985.4,223.8 988.3,221.3 C991.2,218.8 995.7,235.6 998.0,239.7 C1000.3,243.8 1000.5,248.3 1002.3,246.0 C1004.1,243.7 1006.6,228.5 1008.8,225.6 C1011.0,222.7 1013.7,226.1 1015.3,228.8 C1016.9,231.5 1018.0,239.6 1018.6,241.8" fill="none" stroke="#2020e8" stroke-width="1.2" />
<path d="M920.0,238.6 C921.5,239.7 926.5,243.0 928.7,245.0 C930.9,247.0 931.0,251.6 933.0,250.5 C935.0,249.4 938.1,239.8 940.6,238.6 C943.1,237.3 945.9,242.6 948.2,243.0 C950.6,243.4 952.6,239.2 954.7,240.8 C956.8,242.4 960.0,250.7 961.0,252.7" fill="none" stroke="#2020e8" stroke-width="1.2" />
<path d="M892.0,285.0 C892.7,287.2 894.5,296.2 896.3,298.0 C898.1,299.8 901.0,297.8 902.8,296.0 C904.6,294.2 905.5,289.5 907.0,287.3 C908.5,285.1 909.3,280.8 911.5,283.0 C913.7,285.2 917.1,299.6 920.0,300.3 C922.9,301.0 927.3,289.5 928.8,287.3" fill="none" stroke="#2020e8" stroke-width="1.2" />
<path d="M939.7,287.3 C941.1,291.6 945.7,311.5 948.2,313.3 C950.8,315.1 953.2,302.3 955.0,298.0 C956.8,293.7 957.2,285.1 959.0,287.3 C960.8,289.5 963.7,308.7 965.5,311.2 C967.3,313.7 968.2,306.0 970.0,302.5 C971.8,299.0 973.1,288.2 976.0,290.0 C978.9,291.8 984.0,313.3 987.2,313.3 C990.4,313.3 991.0,292.2 995.0,290.0 C999.0,287.8 1007.6,298.6 1011.0,300.3 C1014.4,302.0 1014.0,302.0 1015.3,300.3 C1016.6,298.6 1018.4,291.7 1019.0,290.0" fill="none" stroke="#2020e8" stroke-width="1.2" />
<path d="M830.0,282.0 C831.7,282.8 836.2,286.8 840.0,287.0 C843.8,287.2 848.3,282.2 853.0,283.0 C857.7,283.8 863.0,291.3 868.0,292.0 C873.0,292.7 880.5,287.8 883.0,287.0" fill="none" stroke="#2020e8" stroke-width="1.2" />
<path d="M600.0,241.0 C601.5,242.6 605.1,249.8 608.7,250.5 C612.3,251.2 618.7,246.6 621.7,245.0 C624.8,243.4 624.8,241.0 627.0,240.8 C629.2,240.6 632.0,242.0 634.7,244.0 C637.4,246.0 641.6,251.2 643.0,252.7" fill="none" stroke="#2020e8" stroke-width="1.2" />
<path d="M699.7,251.6 C700.8,250.2 703.5,243.6 706.0,243.0 C708.5,242.4 711.7,248.1 714.8,248.3 C717.9,248.5 721.6,243.3 724.6,244.0 C727.6,244.7 731.6,251.2 733.0,252.7" fill="none" stroke="#2020e8" stroke-width="1.2" />
<path d="M630.3,300.0 C631.8,297.2 636.5,284.7 639.0,283.0 C641.5,281.3 644.0,288.8 645.0,290.0" fill="none" stroke="#2020e8" stroke-width="1.2" />
<path d="M686.7,298.0 C688.5,296.2 694.3,286.9 697.5,287.3 C700.7,287.7 702.8,299.6 706.0,300.3 C709.2,301.0 715.2,293.1 717.0,291.7" fill="none" stroke="#2020e8" stroke-width="1.2" />
<path d="M746.0,298.0 C747.6,296.2 752.9,286.9 755.8,287.3 C758.7,287.7 760.6,299.9 763.3,300.3 C766.0,300.7 769.5,289.9 772.0,289.5 C774.5,289.1 775.2,299.1 778.5,298.0 C781.8,296.9 789.3,285.5 791.5,283.0" fill="none" stroke="#2020e8" stroke-width="1.2" />
<polyline points="18.0,273.7 22.0,263.5 26.0,263.7 30.0,271.3 34.0,274.6 38.0,267.2 42.0,255.5 46.0,252.4 50.0,262.6 54.0,277.6 58.0,284.0 62.0,277.7 66.0,267.8 70.0,265.7 74.0,272.8 78.0,278.8 82.0,274.0 86.0,260.5 90.0,250.9 94.0,254.8 98.0,268.5 102.0,278.9 106.0,277.5 110.0,269.1 114.0,265.6 118.0,272.2 122.0,281.5 126.0,281.5 130.0,269.4 134.0,255.3 138.0,251.9 142.0,261.3 146.0,272.7 150.0,274.9 154.0,268.1 158.0,262.9 162.0,268.2 166.0,280.2 170.0,286.4 174.0,279.0 178.0,263.9 182.0,254.6 186.0,258.3 190.0,268.4 194.0,272.6 198.0,266.9 202.0,259.4 206.0,261.5 210.0,274.0 214.0,285.9 218.0,285.4 222.0,273.1 226.0,260.9 230.0,259.6 234.0,267.3 238.0,272.7 242.0,267.9 246.0,257.9 250.0,254.9 254.0,264.8 258.0,279.8 262.0,286.4 266.0,279.6 270.0,267.6 274.0,262.9 278.0,268.4 282.0,275.0 286.0,272.2 290.0,260.5 294.0,251.8 298.0,256.0 302.0,270.4 306.0,282.0 310.0,281.2 314.0,271.7 318.0,265.5 322.0,269.5 326.0,277.8 330.0,278.5 334.0,267.6 338.0,254.2 342.0,251.1 346.0,261.3 350.0,274.6 354.0,278.8 358.0,272.4 362.0,265.6 366.0,268.2 370.0,278.2 374.0,283.9 378.0,276.8 382.0,261.7 386.0,252.1 390.0,256.0 394.0,267.8 398.0,274.8 402.0,271.0 406.0,263.5 410.0,263.9 414.0,274.5 418.0,285.3 422.0,284.5 426.0,271.6 430.0,258.1 434.0,255.8 438.0,264.1 442.0,271.9 446.0,269.9 450.0,261.4 454.0,258.2 458.0,266.9 462.0,281.1 466.0,287.5 470.0,280.0 474.0,266.2 478.0,259.4 482.0,264.0 486.0,271.7 490.0,271.4" fill="none" stroke="#1818d0" stroke-width="1.0" stroke-linejoin="round" opacity="0.9"/>
<polyline points="18.0,264.9 22.0,274.3 26.0,281.9 30.0,284.6 34.0,281.4 38.0,273.4 42.0,263.7 46.0,256.0 50.0,253.3 54.0,256.6 58.0,264.5 62.0,274.1 66.0,281.5 70.0,284.0 74.0,280.8 78.0,273.1 82.0,264.2 86.0,257.4 90.0,255.3 94.0,258.6 98.0,265.7 102.0,273.8 106.0,279.5 110.0,280.8 114.0,277.3 118.0,270.7 122.0,263.8 126.0,259.5 130.0,259.3 134.0,263.2 138.0,269.4 142.0,275.0 146.0,277.8 150.0,276.6 154.0,272.0 158.0,266.1 162.0,261.5 166.0,260.4 170.0,263.2 174.0,268.7 178.0,274.6 182.0,278.3 186.0,277.9 190.0,273.5 194.0,266.8 198.0,260.7 202.0,257.8 206.0,259.5 210.0,265.3 214.0,273.0 218.0,279.6 222.0,282.1 226.0,279.5 230.0,272.4 234.0,263.7 238.0,256.8 242.0,254.4 246.0,257.7 250.0,265.5 254.0,274.9 258.0,282.2 262.0,284.5 266.0,281.0 270.0,272.7 274.0,263.1 278.0,255.6 282.0,253.3 286.0,257.0 290.0,265.1 294.0,274.7 298.0,281.9 302.0,284.1 306.0,280.5 310.0,272.6 314.0,263.6 318.0,257.0 322.0,255.3 326.0,258.9 330.0,266.2 334.0,274.2 338.0,279.8 342.0,280.8 346.0,277.1 350.0,270.4 354.0,263.5 358.0,259.3 362.0,259.3 366.0,263.4 370.0,269.6 374.0,275.3 378.0,277.9 382.0,276.5 386.0,271.8 390.0,265.9 394.0,261.4 398.0,260.4 402.0,263.4 406.0,269.0 410.0,274.8 414.0,278.3 418.0,277.7 422.0,273.2 426.0,266.5 430.0,260.5 434.0,257.8 438.0,259.8 442.0,265.7 446.0,273.4 450.0,279.8 454.0,282.0 458.0,279.1 462.0,271.9 466.0,263.3 470.0,256.5 474.0,254.5 478.0,258.1 482.0,266.1 486.0,275.4 490.0,282.5" fill="none" stroke="#1818d0" stroke-width="1.0" stroke-linejoin="round" opacity="0.9"/>
<polyline points="18.0,264.9 22.0,271.1 26.0,274.6 30.0,273.4 34.0,269.8 38.0,267.9 42.0,269.9 46.0,273.8 50.0,275.6 54.0,272.7 58.0,266.3 62.0,261.2 66.0,260.8 70.0,265.0 74.0,269.9 78.0,271.6 82.0,269.4 86.0,266.6 90.0,266.8 94.0,271.0 98.0,276.1 102.0,277.7 106.0,274.1 110.0,267.7 114.0,263.1 118.0,263.3 122.0,266.9 126.0,269.8 130.0,269.1 134.0,265.5 138.0,263.0 142.0,264.9 146.0,270.6 150.0,276.4 154.0,277.8 158.0,274.2 162.0,268.8 166.0,265.9 170.0,267.2 174.0,270.3 178.0,271.2 182.0,268.0 186.0,263.0 190.0,260.5 194.0,263.1 198.0,269.4 202.0,274.8 206.0,275.7 210.0,272.4 214.0,268.7 218.0,268.2 222.0,271.1 226.0,274.1 230.0,273.4 234.0,268.4 238.0,262.4 242.0,259.9 246.0,262.7 250.0,268.4 254.0,272.4 258.0,272.2 262.0,269.1 266.0,267.2 270.0,269.1 274.0,273.8 278.0,277.0 282.0,275.5 286.0,269.6 290.0,263.5 294.0,261.5 298.0,264.2 302.0,268.5 306.0,270.3 310.0,268.3 314.0,265.1 318.0,264.7 322.0,268.7 326.0,274.7 330.0,278.1 334.0,276.2 338.0,270.6 342.0,265.6 346.0,264.7 350.0,267.5 354.0,270.2 358.0,269.5 362.0,265.5 366.0,261.8 370.0,262.2 374.0,267.4 378.0,273.9 382.0,277.0 386.0,275.0 390.0,270.4 394.0,267.4 398.0,268.4 402.0,271.6 406.0,273.0 410.0,270.1 414.0,264.4 418.0,260.2 422.0,261.0 426.0,266.3 430.0,272.1 434.0,274.2 438.0,272.0 442.0,268.6 446.0,268.1 450.0,271.3 454.0,275.2 458.0,275.8 462.0,271.5 466.0,264.9 470.0,260.8 474.0,261.8 478.0,266.5 482.0,270.5 486.0,270.7 490.0,267.9" fill="none" stroke="#1818d0" stroke-width="1.0" stroke-linejoin="round" opacity="0.9"/>
<polyline points="18.0,267.1 22.0,257.5 26.0,254.8 30.0,260.1 34.0,269.9 38.0,277.6 42.0,278.7 46.0,273.1 50.0,265.4 54.0,261.3 58.0,264.0 62.0,271.5 66.0,278.4 70.0,279.5 74.0,273.3 78.0,263.1 82.0,255.4 86.0,255.2 90.0,263.0 94.0,274.0 98.0,281.8 102.0,281.7 106.0,274.5 110.0,265.2 114.0,259.9 118.0,261.6 122.0,268.5 126.0,275.3 130.0,276.6 134.0,271.3 138.0,262.9 142.0,257.4 146.0,259.1 150.0,267.7 154.0,278.1 158.0,283.8 162.0,281.2 166.0,271.8 170.0,261.3 174.0,256.0 178.0,258.7 182.0,267.0 186.0,275.1 190.0,277.6 194.0,273.4 198.0,265.9 202.0,260.9 206.0,262.5 210.0,269.9 214.0,278.3 218.0,281.7 222.0,277.2 226.0,267.0 230.0,257.3 234.0,254.0 238.0,259.1 242.0,269.5 246.0,278.6 250.0,281.2 254.0,276.2 258.0,267.7 262.0,261.6 266.0,262.0 270.0,268.2 274.0,275.4 278.0,277.9 282.0,273.5 286.0,264.5 290.0,257.0 294.0,256.2 298.0,263.3 302.0,274.2 306.0,282.5 310.0,283.1 314.0,275.8 318.0,265.4 322.0,258.4 326.0,258.6 330.0,265.3 334.0,273.3 338.0,276.8 342.0,273.6 346.0,266.1 350.0,260.1 354.0,260.3 358.0,267.3 362.0,276.9 366.0,282.8 370.0,280.8 374.0,271.7 378.0,260.8 382.0,254.7 386.0,256.8 390.0,265.5 394.0,275.1 398.0,279.6 402.0,276.7 406.0,269.1 410.0,262.6 414.0,261.9 418.0,267.5 422.0,275.4 426.0,279.5 430.0,276.5 434.0,267.5 438.0,258.1 442.0,254.4 446.0,259.1 450.0,269.6 454.0,279.5 458.0,283.1 462.0,278.5 466.0,269.1 470.0,261.1 474.0,259.5 478.0,264.7 482.0,272.3 486.0,276.7 490.0,274.4" fill="none" stroke="#1818d0" stroke-width="1.0" stroke-linejoin="round" opacity="0.9"/>
<polyline points="18.0,267.5 22.0,275.4 26.0,279.1 30.0,275.3 34.0,268.6 38.0,266.5 42.0,271.2 46.0,277.0 50.0,276.8 54.0,269.8 58.0,262.6 62.0,261.9 66.0,267.4 70.0,272.0 74.0,269.9 78.0,262.9 82.0,258.4 86.0,261.5 90.0,269.2 94.0,273.7 98.0,271.1 102.0,265.3 106.0,263.8 110.0,269.4 114.0,277.0 118.0,279.1 122.0,273.9 126.0,267.5 130.0,266.8 134.0,272.3 138.0,277.2 142.0,275.4 146.0,267.7 150.0,261.5 154.0,262.4 158.0,268.4 162.0,272.0 166.0,268.6 170.0,261.6 174.0,258.6 178.0,263.1 182.0,270.9 186.0,274.1 190.0,270.3 194.0,264.8 198.0,264.7 202.0,271.3 206.0,278.2 210.0,278.6 214.0,272.5 218.0,266.7 222.0,267.4 226.0,273.3 230.0,277.2 234.0,273.7 238.0,265.7 242.0,260.7 246.0,263.1 250.0,269.3 254.0,271.7 258.0,267.2 262.0,260.5 266.0,259.1 270.0,265.0 274.0,272.4 278.0,274.2 282.0,269.4 286.0,264.5 290.0,266.0 294.0,273.2 298.0,279.1 302.0,277.8 306.0,270.9 310.0,266.0 314.0,268.1 318.0,274.2 322.0,276.7 326.0,271.9 330.0,263.8 334.0,260.2 338.0,264.0 342.0,270.2 346.0,271.3 350.0,265.8 354.0,259.7 358.0,260.0 362.0,267.0 366.0,273.8 370.0,274.0 374.0,268.6 378.0,264.5 382.0,267.5 386.0,275.0 390.0,279.6 394.0,276.6 398.0,269.4 402.0,265.7 406.0,269.0 410.0,274.9 414.0,276.0 418.0,269.9 422.0,262.1 426.0,260.2 430.0,265.1 434.0,270.8 438.0,270.5 442.0,264.4 446.0,259.3 450.0,261.3 454.0,269.0 458.0,274.8 462.0,273.6 466.0,267.7 470.0,264.8 474.0,269.1 478.0,276.6 482.0,279.7 486.0,275.2 490.0,268.0" fill="none" stroke="#1818d0" stroke-width="1.0" stroke-linejoin="round" opacity="0.9"/>
<polyline points="18.0,268.3 22.0,280.0 26.0,283.2 30.0,271.5 34.0,261.6 38.0,266.7 42.0,275.0 46.0,269.7 50.0,256.6 54.0,255.0 58.0,266.6 62.0,273.0 66.0,265.2 70.0,258.5 74.0,266.9 78.0,280.2 82.0,280.0 86.0,269.3 90.0,267.1 94.0,277.6 98.0,283.0 102.0,272.7 106.0,260.7 110.0,263.3 114.0,272.8 118.0,270.6 122.0,258.0 126.0,253.9 130.0,264.9 134.0,274.0 138.0,268.6 142.0,260.3 146.0,266.1 150.0,279.9 154.0,282.2 158.0,271.5 162.0,266.2 166.0,274.8 170.0,282.0 174.0,273.7 178.0,260.3 182.0,260.2 186.0,270.2 190.0,271.3 194.0,259.8 198.0,253.7 202.0,263.3 206.0,274.8 210.0,271.9 214.0,262.7 218.0,265.5 222.0,279.0 226.0,283.8 230.0,273.7 234.0,265.5 238.0,271.8 242.0,280.3 246.0,274.5 250.0,260.4 254.0,257.6 258.0,267.5 262.0,271.8 266.0,262.1 270.0,254.2 274.0,262.0 278.0,275.1 282.0,275.1 286.0,265.5 290.0,265.2 294.0,277.6 298.0,284.6 302.0,275.8 306.0,265.2 310.0,268.6 314.0,278.1 318.0,275.0 322.0,261.0 326.0,255.6 330.0,264.8 334.0,271.9 338.0,264.7 342.0,255.5 346.0,261.0 350.0,275.0 354.0,277.9 358.0,268.5 362.0,265.2 366.0,275.8 370.0,284.6 374.0,277.5 378.0,265.2 382.0,265.6 386.0,275.3 390.0,275.1 394.0,262.0 398.0,254.3 402.0,262.2 406.0,271.8 410.0,267.4 414.0,257.5 418.0,260.4 422.0,274.5 426.0,280.2 430.0,271.6 434.0,265.5 438.0,273.8 442.0,283.8 446.0,278.9 450.0,265.5 454.0,262.9 458.0,272.1 462.0,274.8 466.0,263.3 470.0,253.7 474.0,259.9 478.0,271.3 482.0,270.1 486.0,260.0 490.0,260.3" fill="none" stroke="#1818d0" stroke-width="1.0" stroke-linejoin="round" opacity="0.9"/>
<polyline points="18.0,272.7 22.0,263.1 26.0,258.0 30.0,259.8 34.0,266.7 38.0,273.8 42.0,276.7 46.0,273.4 50.0,266.1 54.0,259.6 58.0,258.5 62.0,264.1 66.0,273.8 70.0,282.3 74.0,284.6 78.0,279.0 82.0,268.2 86.0,257.8 90.0,253.1 94.0,256.3 98.0,265.3 102.0,275.0 106.0,280.0 110.0,278.2 114.0,271.4 118.0,264.2 122.0,261.3 126.0,264.6 130.0,271.9 134.0,278.3 138.0,279.4 142.0,273.8 146.0,264.1 150.0,255.7 154.0,253.4 158.0,259.1 162.0,269.9 166.0,280.3 170.0,285.0 174.0,281.7 178.0,272.6 182.0,262.9 186.0,257.9 190.0,259.7 194.0,266.6 198.0,273.8 202.0,276.7 206.0,273.4 210.0,266.1 214.0,259.7 218.0,258.6 222.0,264.3 226.0,274.0 230.0,282.3 234.0,284.5 238.0,278.8 242.0,268.0 246.0,257.6 250.0,253.0 254.0,256.4 258.0,265.5 262.0,275.2 266.0,280.2 270.0,278.3 274.0,271.4 278.0,264.2 282.0,261.3 286.0,264.6 290.0,271.9 294.0,278.2 298.0,279.3 302.0,273.6 306.0,264.0 310.0,255.6 314.0,253.5 318.0,259.3 322.0,270.1 326.0,280.5 330.0,285.0 334.0,281.6 338.0,272.4 342.0,262.8 346.0,257.7 350.0,259.7 354.0,266.6 358.0,273.8 362.0,276.7 366.0,273.4 370.0,266.2 374.0,259.8 378.0,258.8 382.0,264.4 386.0,274.1 390.0,282.4 394.0,284.4 398.0,278.6 402.0,267.7 406.0,257.4 410.0,252.9 414.0,256.4 418.0,265.6 422.0,275.3 426.0,280.3 430.0,278.4 434.0,271.4 438.0,264.2 442.0,261.3 446.0,264.6 450.0,271.8 454.0,278.1 458.0,279.1 462.0,273.5 466.0,263.9 470.0,255.6 474.0,253.7 478.0,259.5 482.0,270.4 486.0,280.7 490.0,285.1" fill="none" stroke="#1818d0" stroke-width="1.0" stroke-linejoin="round" opacity="0.9"/>
<polyline points="18.0,268.0 22.0,272.1 26.0,277.1 30.0,278.4 34.0,273.7 38.0,265.5 42.0,258.8 46.0,257.5 50.0,261.8 54.0,267.8 58.0,270.7 62.0,268.6 66.0,263.6 70.0,260.5 74.0,262.9 78.0,270.1 82.0,277.9 86.0,281.5 90.0,278.8 94.0,272.5 98.0,267.5 102.0,267.3 106.0,271.4 110.0,275.7 114.0,275.7 118.0,270.1 122.0,262.1 126.0,256.6 130.0,257.1 134.0,262.8 138.0,269.3 142.0,271.9 146.0,269.5 150.0,264.8 154.0,262.7 158.0,266.1 162.0,273.5 166.0,280.4 170.0,282.1 174.0,277.8 178.0,270.6 182.0,265.7 186.0,266.0 190.0,270.2 194.0,273.9 198.0,272.9 202.0,266.9 206.0,259.5 210.0,255.6 214.0,258.0 218.0,265.0 222.0,271.6 226.0,273.7 230.0,270.8 234.0,266.3 238.0,265.0 242.0,269.0 246.0,276.1 250.0,281.6 254.0,281.4 258.0,275.5 262.0,267.9 266.0,263.4 270.0,264.4 274.0,268.9 278.0,272.1 282.0,270.5 286.0,264.5 290.0,258.0 294.0,256.0 298.0,260.2 302.0,268.0 306.0,274.5 310.0,275.8 314.0,272.1 318.0,267.7 322.0,266.8 326.0,271.1 330.0,277.6 334.0,281.6 338.0,279.5 342.0,272.4 346.0,264.6 350.0,260.9 354.0,262.9 358.0,267.9 362.0,270.9 366.0,268.9 370.0,263.1 374.0,257.8 378.0,257.6 382.0,263.3 386.0,271.6 390.0,277.4 394.0,277.5 398.0,273.0 402.0,268.4 406.0,267.9 410.0,272.2 414.0,278.0 418.0,280.3 422.0,276.6 426.0,268.6 430.0,261.2 434.0,258.8 438.0,262.1 442.0,267.5 446.0,270.4 450.0,268.2 454.0,262.8 458.0,258.8 462.0,260.2 466.0,267.0 470.0,275.3 474.0,279.9 478.0,278.5 482.0,273.1 486.0,268.3 490.0,268.1" fill="none" stroke="#1818d0" stroke-width="1.0" stroke-linejoin="round" opacity="0.9"/>
<polyline points="18.0,274.9 22.0,276.4 26.0,273.9 30.0,268.3 34.0,261.7 38.0,256.6 42.0,255.4 46.0,258.9 50.0,266.2 54.0,275.1 58.0,282.5 62.0,285.9 66.0,284.1 70.0,277.8 74.0,269.2 78.0,261.2 82.0,256.5 86.0,256.3 90.0,260.3 94.0,266.6 98.0,272.5 102.0,275.7 106.0,275.2 110.0,271.4 114.0,266.2 118.0,262.2 122.0,261.3 126.0,264.3 130.0,270.4 134.0,277.2 138.0,282.2 142.0,283.1 146.0,279.2 150.0,271.5 154.0,262.6 158.0,255.3 162.0,252.2 166.0,254.2 170.0,260.6 174.0,269.2 178.0,276.8 182.0,281.1 186.0,280.9 190.0,276.7 194.0,270.5 198.0,265.1 202.0,262.4 206.0,263.6 210.0,267.8 214.0,273.0 218.0,276.7 222.0,277.1 226.0,273.5 230.0,267.0 234.0,259.9 238.0,255.1 242.0,254.5 246.0,258.8 250.0,266.7 254.0,275.8 258.0,282.9 262.0,285.7 266.0,283.4 270.0,276.9 274.0,268.5 278.0,261.2 282.0,257.4 286.0,258.0 290.0,262.4 294.0,268.4 298.0,273.4 302.0,275.4 306.0,273.7 310.0,269.1 314.0,263.9 318.0,260.4 322.0,260.6 326.0,264.8 330.0,271.7 334.0,278.9 338.0,283.6 342.0,283.8 346.0,279.2 350.0,271.0 354.0,261.9 358.0,255.0 362.0,252.5 366.0,255.1 370.0,261.7 374.0,269.9 378.0,276.8 382.0,280.1 386.0,279.1 390.0,274.6 394.0,268.8 398.0,264.2 402.0,262.8 406.0,265.1 410.0,270.0 414.0,275.3 418.0,278.4 422.0,277.7 426.0,273.0 430.0,265.7 434.0,258.4 438.0,253.8 442.0,253.9 446.0,258.9 450.0,267.3 454.0,276.3 458.0,283.0 462.0,285.2 466.0,282.4 470.0,275.7 474.0,267.7 478.0,261.3 482.0,258.5 486.0,259.9 490.0,264.5" fill="none" stroke="#1818d0" stroke-width="1.0" stroke-linejoin="round" opacity="0.9"/>
<polyline points="18.0,278.8 22.0,282.3 26.0,276.6 30.0,265.0 34.0,255.2 38.0,253.7 42.0,261.6 46.0,273.6 50.0,281.6 54.0,280.7 58.0,272.2 62.0,262.7 66.0,259.2 70.0,264.1 74.0,273.5 78.0,280.1 82.0,278.5 86.0,269.1 90.0,258.3 94.0,253.6 98.0,258.5 102.0,270.1 106.0,280.8 110.0,283.7 114.0,277.3 118.0,266.5 122.0,258.9 126.0,259.6 130.0,267.6 134.0,276.3 138.0,279.0 142.0,273.2 146.0,262.9 150.0,255.6 154.0,256.9 158.0,266.5 162.0,278.5 166.0,284.7 170.0,281.2 174.0,270.6 178.0,260.0 182.0,256.5 186.0,261.8 190.0,271.6 194.0,278.2 198.0,276.8 202.0,268.4 206.0,259.4 210.0,256.9 214.0,263.3 218.0,274.7 222.0,283.5 226.0,283.5 230.0,274.4 234.0,262.3 238.0,255.1 242.0,257.1 246.0,266.5 250.0,276.1 254.0,279.2 258.0,273.9 262.0,264.6 266.0,258.6 270.0,260.8 274.0,270.2 278.0,280.3 282.0,283.7 286.0,277.5 290.0,265.6 294.0,255.6 298.0,254.1 302.0,261.7 306.0,273.0 310.0,280.3 314.0,278.8 318.0,270.4 322.0,261.7 326.0,259.5 330.0,265.5 334.0,275.4 338.0,281.8 342.0,279.4 346.0,269.3 350.0,258.0 354.0,253.1 358.0,258.0 362.0,269.4 366.0,279.8 370.0,282.3 374.0,276.0 378.0,265.9 382.0,259.5 386.0,261.3 390.0,269.7 394.0,278.2 398.0,279.9 402.0,273.0 406.0,261.9 410.0,254.3 414.0,255.8 418.0,265.8 422.0,277.8 426.0,284.0 430.0,280.6 434.0,270.4 438.0,260.7 442.0,258.1 446.0,263.9 450.0,273.3 454.0,278.9 458.0,276.2 462.0,266.9 466.0,257.6 470.0,255.5 474.0,262.6 478.0,274.6 482.0,283.6 486.0,283.6 490.0,274.8" fill="none" stroke="#1818d0" stroke-width="1.0" stroke-linejoin="round" opacity="0.9"/>
<polyline points="18.0,261.1 22.0,265.8 26.0,276.3 30.0,281.0 34.0,275.4 38.0,267.9 42.0,268.7 46.0,277.0 50.0,281.6 54.0,275.6 58.0,265.3 62.0,262.1 66.0,268.1 70.0,273.7 74.0,269.7 78.0,259.8 82.0,255.4 86.0,261.5 90.0,270.2 94.0,270.7 98.0,263.4 102.0,259.1 106.0,265.0 110.0,275.6 114.0,279.2 118.0,273.1 122.0,266.7 126.0,269.5 130.0,278.5 134.0,282.4 138.0,275.8 142.0,266.2 146.0,264.5 150.0,271.2 154.0,275.7 158.0,270.2 162.0,259.9 166.0,256.3 170.0,262.9 174.0,270.4 178.0,269.0 182.0,261.0 186.0,257.4 190.0,264.4 194.0,274.6 198.0,277.0 202.0,270.4 206.0,265.3 210.0,269.8 214.0,279.4 218.0,282.5 222.0,275.4 226.0,266.8 230.0,266.8 234.0,274.1 238.0,277.6 242.0,270.8 246.0,260.5 250.0,258.0 254.0,264.8 258.0,271.0 262.0,267.8 266.0,259.1 270.0,256.3 274.0,264.0 278.0,273.5 282.0,274.4 286.0,267.5 290.0,263.6 294.0,269.7 298.0,279.6 302.0,281.9 306.0,274.5 310.0,267.1 314.0,268.9 318.0,276.8 322.0,279.3 326.0,271.5 330.0,261.5 334.0,260.1 338.0,267.2 342.0,271.9 346.0,267.0 350.0,257.8 354.0,255.9 358.0,264.0 362.0,272.5 366.0,271.8 370.0,264.5 374.0,261.9 378.0,269.3 382.0,279.2 386.0,280.6 390.0,273.0 394.0,267.1 398.0,270.7 402.0,279.0 406.0,280.5 410.0,272.1 414.0,262.8 418.0,262.7 422.0,269.9 426.0,273.2 430.0,266.7 434.0,257.3 438.0,256.2 442.0,264.5 446.0,271.7 450.0,269.4 454.0,261.7 458.0,260.2 462.0,268.7 466.0,278.2 470.0,278.6 474.0,271.0 478.0,266.6 482.0,272.0 486.0,280.6 490.0,281.2" fill="none" stroke="#1818d0" stroke-width="1.0" stroke-linejoin="round" opacity="0.9"/>
<polyline points="18.0,275.3 22.0,271.8 26.0,269.2 30.0,268.3 34.0,269.2 38.0,271.1 42.0,272.8 46.0,272.8 50.0,270.7 54.0,266.6 58.0,261.8 62.0,258.0 66.0,256.5 70.0,258.2 74.0,262.8 78.0,269.0 82.0,274.9 86.0,279.0 90.0,280.1 94.0,278.4 98.0,274.8 102.0,270.8 106.0,268.0 110.0,267.1 114.0,268.1 118.0,270.0 122.0,271.4 126.0,271.2 130.0,268.9 134.0,265.0 138.0,260.8 142.0,257.9 146.0,257.6 150.0,260.4 154.0,265.6 158.0,272.0 162.0,277.5 166.0,280.7 170.0,280.7 174.0,278.0 178.0,273.6 182.0,269.3 186.0,266.5 190.0,265.7 194.0,266.9 198.0,268.8 202.0,270.1 206.0,269.8 210.0,267.6 214.0,264.0 218.0,260.5 222.0,258.6 226.0,259.3 230.0,262.9 234.0,268.6 238.0,274.8 242.0,279.7 246.0,281.8 250.0,280.7 254.0,276.9 258.0,271.9 262.0,267.4 266.0,264.7 270.0,264.2 274.0,265.7 278.0,267.8 282.0,269.2 286.0,268.9 290.0,266.8 294.0,263.7 298.0,260.8 302.0,259.8 306.0,261.4 310.0,265.7 314.0,271.5 318.0,277.3 322.0,281.2 326.0,282.1 330.0,279.8 334.0,275.2 338.0,269.7 342.0,265.2 346.0,262.8 350.0,262.8 354.0,264.7 358.0,267.1 362.0,268.7 366.0,268.5 370.0,266.6 374.0,263.9 378.0,261.7 382.0,261.4 386.0,263.8 390.0,268.4 394.0,274.1 398.0,279.2 402.0,282.1 406.0,281.7 410.0,278.3 414.0,272.8 418.0,267.1 422.0,262.8 426.0,261.0 430.0,261.7 434.0,264.2 438.0,266.9 442.0,268.7 446.0,268.6 450.0,266.9 454.0,264.6 458.0,263.0 462.0,263.3 466.0,266.1 470.0,270.9 474.0,276.2 478.0,280.5 482.0,282.2 486.0,280.6 490.0,276.1" fill="none" stroke="#1818d0" stroke-width="1.0" stroke-linejoin="round" opacity="0.9"/>
<polyline points="25.0,261.0 35.0,236.0 46.0,261.0" fill="none" stroke="#2020e8" stroke-width="1.2" stroke-linejoin="round" />
<polyline points="27.2,262.6 37.2,240.1 48.2,262.6" fill="none" stroke="#1a1ad8" stroke-width="1.0" stroke-linejoin="round" opacity="0.8"/>
<polyline points="25.1,260.4 35.1,234.6 46.1,260.4" fill="none" stroke="#1a1ad8" stroke-width="1.0" stroke-linejoin="round" opacity="0.8"/>
<polyline points="57.0,277.0 65.0,299.0 70.0,282.0 76.0,283.0 82.0,298.0 93.0,277.0" fill="none" stroke="#2020e8" stroke-width="1.2" stroke-linejoin="round" />
<polyline points="58.2,276.6 66.2,299.4 71.2,281.8 77.2,282.8 83.2,298.4 94.2,276.6" fill="none" stroke="#1a1ad8" stroke-width="1.0" stroke-linejoin="round" opacity="0.8"/>
<polyline points="54.7,278.2 62.7,302.1 67.7,283.7 73.7,284.7 79.7,301.0 90.7,278.2" fill="none" stroke="#1a1ad8" stroke-width="1.0" stroke-linejoin="round" opacity="0.8"/>
<polyline points="71.0,282.0 76.0,288.0 81.0,290.0 88.0,280.0" fill="none" stroke="#2020e8" stroke-width="1.2" stroke-linejoin="round" />
<polyline points="70.2,281.1 75.2,287.0 80.2,288.9 87.2,279.1" fill="none" stroke="#1a1ad8" stroke-width="1.0" stroke-linejoin="round" opacity="0.8"/>
<polyline points="70.2,283.7 75.2,290.1 80.2,292.3 87.2,281.5" fill="none" stroke="#1a1ad8" stroke-width="1.0" stroke-linejoin="round" opacity="0.8"/>
<polyline points="97.0,262.0 101.0,250.6 106.0,252.0 112.0,252.0 119.0,245.0 123.0,257.0 126.0,258.0 131.0,256.0 134.0,259.0 138.0,261.0" fill="none" stroke="#2020e8" stroke-width="1.2" stroke-linejoin="round" />
<polyline points="96.1,262.9 100.1,252.7 105.1,254.0 111.1,254.0 118.1,247.7 122.1,258.4 125.1,259.3 130.1,257.6 133.1,260.2 137.1,262.0" fill="none" stroke="#1a1ad8" stroke-width="1.0" stroke-linejoin="round" opacity="0.8"/>
<polyline points="94.9,262.7 98.9,253.0 103.9,254.2 109.9,254.2 116.9,248.3 120.9,258.4 123.9,259.3 128.9,257.6 131.9,260.1 135.9,261.8" fill="none" stroke="#1a1ad8" stroke-width="1.0" stroke-linejoin="round" opacity="0.8"/>
<polyline points="98.0,276.0 100.0,281.0 104.0,276.0" fill="none" stroke="#2020e8" stroke-width="1.2" stroke-linejoin="round" />
<polyline points="100.5,275.4 102.5,279.7 106.5,275.4" fill="none" stroke="#1a1ad8" stroke-width="1.0" stroke-linejoin="round" opacity="0.8"/>
<polyline points="100.4,274.9 102.4,279.7 106.4,274.9" fill="none" stroke="#1a1ad8" stroke-width="1.0" stroke-linejoin="round" opacity="0.8"/>
<polyline points="131.0,277.0 136.0,284.0 141.0,277.0" fill="none" stroke="#2020e8" stroke-width="1.2" stroke-linejoin="round" />
<polyline points="129.7,276.7 134.7,283.5 139.7,276.7" fill="none" stroke="#1a1ad8" stroke-width="1.0" stroke-linejoin="round" opacity="0.8"/>
<polyline points="130.8,277.1 135.8,283.6 140.8,277.1" fill="none" stroke="#1a1ad8" stroke-width="1.0" stroke-linejoin="round" opacity="0.8"/>
<polyline points="148.0,261.0 159.0,234.0 166.0,261.0" fill="none" stroke="#2020e8" stroke-width="1.2" stroke-linejoin="round" />
<polyline points="150.1,261.9 161.1,240.0 168.1,261.9" fill="none" stroke="#1a1ad8" stroke-width="1.0" stroke-linejoin="round" opacity="0.8"/>
<polyline points="149.7,262.4 160.7,239.8 167.7,262.4" fill="none" stroke="#1a1ad8" stroke-width="1.0" stroke-linejoin="round" opacity="0.8"/>
<polyline points="158.0,261.0 165.0,234.0 169.0,234.0 177.0,261.0" fill="none" stroke="#2020e8" stroke-width="1.2" stroke-linejoin="round" />
<polyline points="160.2,261.5 167.2,234.8 171.2,234.8 179.2,261.5" fill="none" stroke="#1a1ad8" stroke-width="1.0" stroke-linejoin="round" opacity="0.8"/>
<polyline points="156.0,262.1 163.0,237.0 167.0,237.0 175.0,262.1" fill="none" stroke="#1a1ad8" stroke-width="1.0" stroke-linejoin="round" opacity="0.8"/>
<polyline points="155.0,277.0 160.0,283.0 168.0,285.0 176.0,279.0" fill="none" stroke="#2020e8" stroke-width="1.2" stroke-linejoin="round" />
<polyline points="156.7,275.6 161.7,280.9 169.7,282.7 177.7,277.4" fill="none" stroke="#1a1ad8" stroke-width="1.0" stroke-linejoin="round" opacity="0.8"/>
<polyline points="157.5,277.3 162.5,283.6 170.5,285.8 178.5,279.4" fill="none" stroke="#1a1ad8" stroke-width="1.0" stroke-linejoin="round" opacity="0.8"/>
<polyline points="184.0,261.0 187.0,259.0 193.0,253.0 200.0,253.0 206.0,257.0 210.0,253.0 216.0,254.0 221.0,259.0" fill="none" stroke="#2020e8" stroke-width="1.2" stroke-linejoin="round" />
<polyline points="183.8,262.3 186.8,260.4 192.8,254.8 199.8,254.8 205.8,258.6 209.8,254.8 215.8,255.7 220.8,260.4" fill="none" stroke="#1a1ad8" stroke-width="1.0" stroke-linejoin="round" opacity="0.8"/>
<polyline points="183.9,262.4 186.9,260.7 192.9,255.3 199.9,255.3 205.9,258.9 209.9,255.3 215.9,256.2 220.9,260.7" fill="none" stroke="#1a1ad8" stroke-width="1.0" stroke-linejoin="round" opacity="0.8"/>
<polyline points="180.0,277.0 189.0,309.0 193.0,295.0 196.0,305.0 202.0,287.0 210.0,283.0 216.0,275.0" fill="none" stroke="#2020e8" stroke-width="1.2" stroke-linejoin="round" />
<polyline points="178.2,276.2 187.2,305.4 191.2,292.7 194.2,301.8 200.2,285.3 208.2,281.7 214.2,274.4" fill="none" stroke="#1a1ad8" stroke-width="1.0" stroke-linejoin="round" opacity="0.8"/>
<polyline points="182.3,277.8 191.3,309.4 195.3,295.6 198.3,305.5 204.3,287.7 212.3,283.7 218.3,275.8" fill="none" stroke="#1a1ad8" stroke-width="1.0" stroke-linejoin="round" opacity="0.8"/>
<polyline points="194.0,283.0 200.0,290.0 206.0,280.0" fill="none" stroke="#2020e8" stroke-width="1.2" stroke-linejoin="round" />
<polyline points="193.2,280.7 199.2,286.5 205.2,278.3" fill="none" stroke="#1a1ad8" stroke-width="1.0" stroke-linejoin="round" opacity="0.8"/>
<polyline points="195.4,283.4 201.4,290.8 207.4,280.2" fill="none" stroke="#1a1ad8" stroke-width="1.0" stroke-linejoin="round" opacity="0.8"/>
<polyline points="222.0,277.0 224.0,281.0 232.0,287.0 240.0,309.0 246.0,299.0 256.0,277.0" fill="none" stroke="#2020e8" stroke-width="1.2" stroke-linejoin="round" />
<polyline points="223.4,277.0 225.4,281.1 233.4,287.3 241.4,310.0 247.4,299.7 257.4,277.0" fill="none" stroke="#1a1ad8" stroke-width="1.0" stroke-linejoin="round" opacity="0.8"/>
<polyline points="222.8,277.5 224.8,281.7 232.8,287.8 240.8,310.4 246.8,300.2 256.8,277.5" fill="none" stroke="#1a1ad8" stroke-width="1.0" stroke-linejoin="round" opacity="0.8"/>
<polyline points="250.0,261.0 262.0,229.0 270.0,239.0 276.0,235.0 282.0,245.0 288.0,261.0" fill="none" stroke="#2020e8" stroke-width="1.2" stroke-linejoin="round" />
<polyline points="251.0,261.8 263.0,233.5 271.0,242.3 277.0,238.8 283.0,247.6 289.0,261.8" fill="none" stroke="#1a1ad8" stroke-width="1.0" stroke-linejoin="round" opacity="0.8"/>
<polyline points="251.3,260.9 263.3,228.7 271.3,238.7 277.3,234.7 283.3,244.8 289.3,260.9" fill="none" stroke="#1a1ad8" stroke-width="1.0" stroke-linejoin="round" opacity="0.8"/>
<polyline points="255.0,261.0 267.0,234.0 275.0,250.0 280.0,261.0" fill="none" stroke="#2020e8" stroke-width="1.2" stroke-linejoin="round" />
<polyline points="257.2,260.7 269.2,233.8 277.2,249.7 282.2,260.7" fill="none" stroke="#1a1ad8" stroke-width="1.0" stroke-linejoin="round" opacity="0.8"/>
<polyline points="252.6,261.5 264.6,235.4 272.6,250.9 277.6,261.5" fill="none" stroke="#1a1ad8" stroke-width="1.0" stroke-linejoin="round" opacity="0.8"/>
<polyline points="288.0,261.0 292.0,251.0 300.0,251.0 304.0,256.0 306.0,261.0" fill="none" stroke="#2020e8" stroke-width="1.2" stroke-linejoin="round" />
<polyline points="288.9,261.1 292.9,251.7 300.9,251.7 304.9,256.4 306.9,261.1" fill="none" stroke="#1a1ad8" stroke-width="1.0" stroke-linejoin="round" opacity="0.8"/>
<polyline points="288.7,261.2 292.7,250.8 300.7,250.8 304.7,256.0 306.7,261.2" fill="none" stroke="#1a1ad8" stroke-width="1.0" stroke-linejoin="round" opacity="0.8"/>
<polyline points="308.0,261.0 312.0,259.0 317.0,252.0 322.0,253.0 328.0,254.0 334.0,255.0 338.0,261.0" fill="none" stroke="#2020e8" stroke-width="1.2" stroke-linejoin="round" />
<polyline points="308.7,260.5 312.7,258.5 317.7,251.3 322.7,252.4 328.7,253.4 334.7,254.4 338.7,260.5" fill="none" stroke="#1a1ad8" stroke-width="1.0" stroke-linejoin="round" opacity="0.8"/>
<polyline points="307.3,261.1 311.3,259.0 316.3,251.6 321.3,252.7 327.3,253.7 333.3,254.8 337.3,261.1" fill="none" stroke="#1a1ad8" stroke-width="1.0" stroke-linejoin="round" opacity="0.8"/>
<polyline points="340.0,261.0 344.0,257.0 348.0,251.0 352.0,251.0 356.0,257.0 358.0,261.0" fill="none" stroke="#2020e8" stroke-width="1.2" stroke-linejoin="round" />
<polyline points="340.9,260.8 344.9,256.5 348.9,249.9 352.9,249.9 356.9,256.5 358.9,260.8" fill="none" stroke="#1a1ad8" stroke-width="1.0" stroke-linejoin="round" opacity="0.8"/>
<polyline points="340.1,262.2 344.1,258.4 348.1,252.6 352.1,252.6 356.1,258.4 358.1,262.2" fill="none" stroke="#1a1ad8" stroke-width="1.0" stroke-linejoin="round" opacity="0.8"/>
<polyline points="356.0,261.0 358.0,255.0 366.0,235.0 371.0,245.0 374.0,261.0" fill="none" stroke="#2020e8" stroke-width="1.2" stroke-linejoin="round" />
<polyline points="357.7,259.7 359.7,253.2 367.7,231.6 372.7,242.4 375.7,259.7" fill="none" stroke="#1a1ad8" stroke-width="1.0" stroke-linejoin="round" opacity="0.8"/>
<polyline points="357.0,260.8 359.0,254.7 367.0,234.4 372.0,244.6 375.0,260.8" fill="none" stroke="#1a1ad8" stroke-width="1.0" stroke-linejoin="round" opacity="0.8"/>
<polyline points="370.0,261.0 374.0,251.0 382.0,255.0 386.0,261.0" fill="none" stroke="#2020e8" stroke-width="1.2" stroke-linejoin="round" />
<polyline points="368.4,261.1 372.4,250.8 380.4,254.9 384.4,261.1" fill="none" stroke="#1a1ad8" stroke-width="1.0" stroke-linejoin="round" opacity="0.8"/>
<polyline points="370.8,261.8 374.8,252.5 382.8,256.3 386.8,261.8" fill="none" stroke="#1a1ad8" stroke-width="1.0" stroke-linejoin="round" opacity="0.8"/>
<polyline points="280.0,277.0 284.0,279.0 290.0,299.0 295.0,295.0 301.0,305.0 308.0,293.0 316.0,293.0 322.0,283.0 326.0,298.0 331.0,297.0 338.0,281.0 344.0,279.0 350.0,286.0 356.0,281.0 360.0,277.0" fill="none" stroke="#2020e8" stroke-width="1.2" stroke-linejoin="round" />
<polyline points="281.4,277.2 285.4,279.1 291.4,299.0 296.4,295.0 302.4,304.9 309.4,293.0 317.4,293.0 323.4,283.1 327.4,298.0 332.4,297.0 339.4,281.1 345.4,279.1 351.4,286.1 357.4,281.1 361.4,277.2" fill="none" stroke="#1a1ad8" stroke-width="1.0" stroke-linejoin="round" opacity="0.8"/>
<polyline points="277.6,276.3 281.6,278.0 287.6,295.0 292.6,291.6 298.6,300.1 305.6,289.9 313.6,289.9 319.6,281.4 323.6,294.1 328.6,293.3 335.6,279.7 341.6,278.0 347.6,284.0 353.6,279.7 357.6,276.3" fill="none" stroke="#1a1ad8" stroke-width="1.0" stroke-linejoin="round" opacity="0.8"/>
<polyline points="378.0,277.0 382.0,277.0 392.0,299.0 395.5,305.0 403.7,288.7 408.0,277.0" fill="none" stroke="#2020e8" stroke-width="1.2" stroke-linejoin="round" />
<polyline points="378.8,276.0 382.8,276.0 392.8,295.0 396.3,300.2 404.5,286.1 408.8,276.0" fill="none" stroke="#1a1ad8" stroke-width="1.0" stroke-linejoin="round" opacity="0.8"/>
<polyline points="378.7,276.0 382.7,276.0 392.7,293.9 396.2,298.8 404.4,285.5 408.7,276.0" fill="none" stroke="#1a1ad8" stroke-width="1.0" stroke-linejoin="round" opacity="0.8"/>
<polyline points="385.0,277.0 390.0,290.0 398.0,296.0 405.0,280.0" fill="none" stroke="#2020e8" stroke-width="1.2" stroke-linejoin="round" />
<polyline points="383.6,275.7 388.6,286.3 396.6,291.2 403.6,278.1" fill="none" stroke="#1a1ad8" stroke-width="1.0" stroke-linejoin="round" opacity="0.8"/>
<polyline points="384.1,275.3 389.1,286.4 397.1,291.6 404.1,277.9" fill="none" stroke="#1a1ad8" stroke-width="1.0" stroke-linejoin="round" opacity="0.8"/>
<polyline points="410.0,261.0 415.0,254.0 427.0,235.0 431.7,246.7 438.7,244.0 445.7,256.0 455.0,255.0 462.0,256.0 475.0,256.0 480.7,260.7" fill="none" stroke="#2020e8" stroke-width="1.2" stroke-linejoin="round" />
<polyline points="407.7,261.0 412.7,254.4 424.7,236.6 429.4,247.6 436.4,245.0 443.4,256.3 452.7,255.4 459.7,256.3 472.7,256.3 478.4,260.7" fill="none" stroke="#1a1ad8" stroke-width="1.0" stroke-linejoin="round" opacity="0.8"/>
<polyline points="410.6,261.0 415.6,254.2 427.6,235.6 432.3,247.0 439.3,244.4 446.3,256.1 455.6,255.1 462.6,256.1 475.6,256.1 481.3,260.7" fill="none" stroke="#1a1ad8" stroke-width="1.0" stroke-linejoin="round" opacity="0.8"/>
<polyline points="420.0,261.0 428.0,248.0 436.0,252.0 442.0,261.0" fill="none" stroke="#2020e8" stroke-width="1.2" stroke-linejoin="round" />
<polyline points="422.0,262.3 430.0,251.9 438.0,255.1 444.0,262.3" fill="none" stroke="#1a1ad8" stroke-width="1.0" stroke-linejoin="round" opacity="0.8"/>
<polyline points="418.9,261.5 426.9,249.5 434.9,253.2 440.9,261.5" fill="none" stroke="#1a1ad8" stroke-width="1.0" stroke-linejoin="round" opacity="0.8"/>
<polyline points="445.0,277.0 452.7,288.7 456.0,299.0 462.0,288.7 464.0,277.0" fill="none" stroke="#2020e8" stroke-width="1.2" stroke-linejoin="round" />
<polyline points="446.7,275.7 454.4,286.4 457.7,295.8 463.7,286.4 465.7,275.7" fill="none" stroke="#1a1ad8" stroke-width="1.0" stroke-linejoin="round" opacity="0.8"/>
<polyline points="445.6,275.0 453.3,284.7 456.6,293.2 462.6,284.7 464.6,275.0" fill="none" stroke="#1a1ad8" stroke-width="1.0" stroke-linejoin="round" opacity="0.8"/>
<polyline points="420.0,277.0 425.0,285.0 432.0,280.0" fill="none" stroke="#2020e8" stroke-width="1.2" stroke-linejoin="round" />
<polyline points="419.2,276.9 424.2,284.7 431.2,279.8" fill="none" stroke="#1a1ad8" stroke-width="1.0" stroke-linejoin="round" opacity="0.8"/>
<polyline points="421.6,277.3 426.6,284.7 433.6,280.1" fill="none" stroke="#1a1ad8" stroke-width="1.0" stroke-linejoin="round" opacity="0.8"/>
<g filter="url(#mott)">
<rect x="18" y="260" width="474" height="3" fill="#1010e0" />
<rect x="18" y="263" width="474" height="2" fill="#1878e8" />
<rect x="18" y="275" width="474" height="3" fill="#1010e0" />
</g>
<rect x="18" y="265" width="474" height="1" fill="#10c0c0" />
<rect x="18" y="266" width="474" height="1" fill="#30c890" />
<rect x="18" y="267" width="474" height="2" fill="#e04808" />
<rect x="18" y="269" width="474" height="1" fill="#40d030" />
<rect x="18" y="270" width="474" height="1" fill="#30d040" />
<rect x="18" y="271" width="474" height="1" fill="#20b0c0" />
<rect x="18" y="272" width="474" height="2" fill="#1070e0" />
<rect x="18" y="274" width="474" height="1" fill="#1818e0" />
<rect x="18" y="275" width="470" height="5" fill="#000" filter="url(#holes)"/>
<defs><linearGradient id="fadeR" x1="0" y1="0" x2="1" y2="0"><stop offset="0" stop-color="#fff" stop-opacity="0"/><stop offset="0.1" stop-color="#fff" stop-opacity="1"/><stop offset="1" stop-color="#fff" stop-opacity="1"/></linearGradient><mask id="mR" maskUnits="userSpaceOnUse" x="0" y="0" width="1024" height="600"><rect x="600" y="250" width="419" height="40" fill="url(#fadeR)"/></mask></defs>
<g opacity="0.9" mask="url(#mR)">
<rect x="600" y="261" width="419" height="2" fill="#1a50f0" />
<rect x="600" y="263" width="419" height="2" fill="#18a0e8" />
<rect x="600" y="265" width="419" height="1" fill="#20c0c0" />
<rect x="600" y="266" width="419" height="1" fill="#40d870" />
<rect x="600" y="267" width="419" height="1" fill="#50e040" />
<rect x="600" y="268" width="419" height="1" fill="#a0d820" />
<rect x="600" y="269" width="419" height="1" fill="#60e030" />
<rect x="600" y="270" width="419" height="1" fill="#40d850" />
<rect x="600" y="271" width="419" height="2" fill="#20c0c8" />
<rect x="600" y="273" width="419" height="2" fill="#1890e8" />
<rect x="600" y="275" width="419" height="2" fill="#1a50f0" />
</g>
<path d="M600.0,270.0 C601.6,271.8 606.1,283.2 609.7,281.0 C613.3,278.8 616.7,258.8 621.7,257.0 C626.8,255.2 633.5,265.3 640.0,270.0 C646.5,274.7 654.9,285.0 660.7,285.0 C666.5,285.0 670.0,274.7 675.0,270.0 C680.0,265.3 686.3,257.0 691.0,257.0 C695.7,257.0 698.7,265.7 703.0,270.0 C707.3,274.3 712.5,283.0 717.0,283.0 C721.5,283.0 725.9,274.7 730.0,270.0 C734.1,265.3 738.0,255.0 741.7,255.0 C745.4,255.0 748.4,265.0 752.0,270.0 C755.6,275.0 759.6,285.0 763.3,285.0 C767.0,285.0 770.4,275.2 774.0,270.0 C777.6,264.8 781.2,254.0 785.0,254.0 C788.8,254.0 793.0,265.2 797.0,270.0 C801.0,274.8 805.0,283.0 808.8,283.0 C812.6,283.0 816.1,273.5 820.0,270.0 C823.9,266.5 827.7,262.0 832.0,262.0 C836.3,262.0 843.7,268.7 846.0,270.0" fill="none" stroke="#1890e8" stroke-width="6" opacity="0.7"/>
<path d="M820.0,270.0 C822.0,268.7 827.7,262.0 832.0,262.0 C836.3,262.0 841.7,267.5 846.0,270.0 C850.3,272.5 854.0,277.0 858.0,277.0 C862.0,277.0 865.7,272.3 870.0,270.0 C874.3,267.7 879.5,263.0 884.0,263.0 C888.5,263.0 892.7,267.7 897.0,270.0 C901.3,272.3 905.8,277.0 910.0,277.0 C914.2,277.0 917.8,272.2 922.0,270.0 C926.2,267.8 930.7,264.0 935.0,264.0 C939.3,264.0 943.8,268.0 948.0,270.0 C952.2,272.0 956.0,276.0 960.0,276.0 C964.0,276.0 970.0,271.0 972.0,270.0" fill="none" stroke="#1890e8" stroke-width="4" opacity="0.35"/>
<path d="M600.0,262.0 C602.0,261.3 607.0,255.8 612.0,258.0 C617.0,260.2 624.3,270.7 630.0,275.0 C635.7,279.3 640.7,284.8 646.0,284.0 C651.3,283.2 657.0,274.3 662.0,270.0 C667.0,265.7 671.3,258.3 676.0,258.0 C680.7,257.7 685.3,264.3 690.0,268.0 C694.7,271.7 699.0,280.0 704.0,280.0 C709.0,280.0 714.8,271.3 720.0,268.0 C725.2,264.7 730.0,258.8 735.0,260.0 C740.0,261.2 745.8,271.7 750.0,275.0 C754.2,278.3 755.8,282.2 760.0,280.0 C764.2,277.8 770.0,265.7 775.0,262.0 C780.0,258.3 785.3,256.0 790.0,258.0 C794.7,260.0 800.8,271.3 803.0,274.0" fill="none" stroke="#1a70f0" stroke-width="5" opacity="0.6"/>
<path d="M600.0,268.5 C601.6,270.3 606.1,281.7 609.7,279.5 C613.3,277.3 616.7,257.3 621.7,255.5 C626.8,253.7 633.5,263.8 640.0,268.5 C646.5,273.2 654.9,283.5 660.7,283.5 C666.5,283.5 670.0,273.2 675.0,268.5 C680.0,263.8 686.3,255.5 691.0,255.5 C695.7,255.5 698.7,264.2 703.0,268.5 C707.3,272.8 712.5,281.5 717.0,281.5 C721.5,281.5 725.9,273.2 730.0,268.5 C734.1,263.8 738.0,253.5 741.7,253.5 C745.4,253.5 748.4,263.5 752.0,268.5 C755.6,273.5 759.6,283.5 763.3,283.5 C767.0,283.5 770.4,273.7 774.0,268.5 C777.6,263.3 781.2,252.5 785.0,252.5 C788.8,252.5 793.0,263.7 797.0,268.5 C801.0,273.3 805.0,281.5 808.8,281.5 C812.6,281.5 816.1,272.0 820.0,268.5 C823.9,265.0 827.7,260.5 832.0,260.5 C836.3,260.5 843.7,267.2 846.0,268.5" fill="none" stroke="#20d0d8" stroke-width="1.2" opacity="0.8"/>
<path d="M820.0,268.5 C822.0,267.2 827.7,260.5 832.0,260.5 C836.3,260.5 841.7,266.0 846.0,268.5 C850.3,271.0 854.0,275.5 858.0,275.5 C862.0,275.5 865.7,270.8 870.0,268.5 C874.3,266.2 879.5,261.5 884.0,261.5 C888.5,261.5 892.7,266.2 897.0,268.5 C901.3,270.8 905.8,275.5 910.0,275.5 C914.2,275.5 917.8,270.7 922.0,268.5 C926.2,266.3 930.7,262.5 935.0,262.5 C939.3,262.5 943.8,266.5 948.0,268.5 C952.2,270.5 956.0,274.5 960.0,274.5 C964.0,274.5 970.0,269.5 972.0,268.5" fill="none" stroke="#20c0d8" stroke-width="1.0" opacity="0.35"/>
<path d="M600.0,271.5 C601.6,273.3 606.1,284.7 609.7,282.5 C613.3,280.3 616.7,260.3 621.7,258.5 C626.8,256.7 633.5,266.8 640.0,271.5 C646.5,276.2 654.9,286.5 660.7,286.5 C666.5,286.5 670.0,276.2 675.0,271.5 C680.0,266.8 686.3,258.5 691.0,258.5 C695.7,258.5 698.7,267.2 703.0,271.5 C707.3,275.8 712.5,284.5 717.0,284.5 C721.5,284.5 725.9,276.2 730.0,271.5 C734.1,266.8 738.0,256.5 741.7,256.5 C745.4,256.5 748.4,266.5 752.0,271.5 C755.6,276.5 759.6,286.5 763.3,286.5 C767.0,286.5 770.4,276.7 774.0,271.5 C777.6,266.3 781.2,255.5 785.0,255.5 C788.8,255.5 793.0,266.7 797.0,271.5 C801.0,276.3 805.0,284.5 808.8,284.5 C812.6,284.5 816.1,275.0 820.0,271.5 C823.9,268.0 827.7,263.5 832.0,263.5 C836.3,263.5 843.7,270.2 846.0,271.5" fill="none" stroke="#20d0d8" stroke-width="1.2" opacity="0.8"/>
<path d="M820.0,271.5 C822.0,270.2 827.7,263.5 832.0,263.5 C836.3,263.5 841.7,269.0 846.0,271.5 C850.3,274.0 854.0,278.5 858.0,278.5 C862.0,278.5 865.7,273.8 870.0,271.5 C874.3,269.2 879.5,264.5 884.0,264.5 C888.5,264.5 892.7,269.2 897.0,271.5 C901.3,273.8 905.8,278.5 910.0,278.5 C914.2,278.5 917.8,273.7 922.0,271.5 C926.2,269.3 930.7,265.5 935.0,265.5 C939.3,265.5 943.8,269.5 948.0,271.5 C952.2,273.5 956.0,277.5 960.0,277.5 C964.0,277.5 970.0,272.5 972.0,271.5" fill="none" stroke="#20c0d8" stroke-width="1.0" opacity="0.35"/>
<path d="M600.0,260.5 C602.0,259.8 607.0,254.3 612.0,256.5 C617.0,258.7 624.3,269.2 630.0,273.5 C635.7,277.8 640.7,283.3 646.0,282.5 C651.3,281.7 657.0,272.8 662.0,268.5 C667.0,264.2 671.3,256.8 676.0,256.5 C680.7,256.2 685.3,262.8 690.0,266.5 C694.7,270.2 699.0,278.5 704.0,278.5 C709.0,278.5 714.8,269.8 720.0,266.5 C725.2,263.2 730.0,257.3 735.0,258.5 C740.0,259.7 745.8,270.2 750.0,273.5 C754.2,276.8 755.8,280.7 760.0,278.5 C764.2,276.3 770.0,264.2 775.0,260.5 C780.0,256.8 785.3,254.5 790.0,256.5 C794.7,258.5 800.8,269.8 803.0,272.5" fill="none" stroke="#10a8e0" stroke-width="1.1" opacity="0.6"/>
<path d="M600.0,263.5 C602.0,262.8 607.0,257.3 612.0,259.5 C617.0,261.7 624.3,272.2 630.0,276.5 C635.7,280.8 640.7,286.3 646.0,285.5 C651.3,284.7 657.0,275.8 662.0,271.5 C667.0,267.2 671.3,259.8 676.0,259.5 C680.7,259.2 685.3,265.8 690.0,269.5 C694.7,273.2 699.0,281.5 704.0,281.5 C709.0,281.5 714.8,272.8 720.0,269.5 C725.2,266.2 730.0,260.3 735.0,261.5 C740.0,262.7 745.8,273.2 750.0,276.5 C754.2,279.8 755.8,283.7 760.0,281.5 C764.2,279.3 770.0,267.2 775.0,263.5 C780.0,259.8 785.3,257.5 790.0,259.5 C794.7,261.5 800.8,272.8 803.0,275.5" fill="none" stroke="#10a8e0" stroke-width="1.1" opacity="0.6"/>
<rect x="709" y="269" width="1" height="1" fill="#c8c020" />
<rect x="950" y="268" width="1" height="1" fill="#c8c020" />
<rect x="735" y="269" width="1" height="1" fill="#e8a010" />
<rect x="883" y="268" width="1" height="1" fill="#e03010" />
<rect x="632" y="268" width="1" height="1" fill="#c8c020" />
<rect x="660" y="268" width="1" height="1" fill="#e8a010" />
<rect x="744" y="267" width="1" height="1" fill="#c8c020" />
<rect x="1003" y="269" width="1" height="1" fill="#c8c020" />
<rect x="642" y="268" width="1" height="1" fill="#c8c020" />
<rect x="980" y="267" width="1" height="1" fill="#d05010" />
<rect x="636" y="268" width="1" height="1" fill="#e03010" />
<rect x="688" y="267" width="1" height="1" fill="#c8c020" />
<rect x="707" y="268" width="1" height="1" fill="#c8c020" />
<rect x="873" y="268" width="1" height="1" fill="#e8a010" />
<rect x="965" y="267" width="1" height="1" fill="#c8c020" />
<rect x="745" y="267" width="1" height="1" fill="#e8a010" />
<rect x="731" y="267" width="1" height="1" fill="#e03010" />
<rect x="911" y="269" width="1" height="1" fill="#c8c020" />
<rect x="727" y="268" width="1" height="1" fill="#e8a010" />
<rect x="899" y="269" width="1" height="1" fill="#d05010" />
<rect x="811" y="269" width="1" height="1" fill="#c8c020" />
<rect x="787" y="269" width="1" height="1" fill="#c8c020" />
<rect x="761" y="267" width="1" height="1" fill="#e03010" />
<rect x="706" y="269" width="1" height="1" fill="#e03010" />
<rect x="876" y="267" width="1" height="1" fill="#e8a010" />
<rect x="917" y="268" width="1" height="1" fill="#e03010" />
<rect x="717" y="268" width="1" height="1" fill="#d05010" />
<rect x="795" y="268" width="1" height="1" fill="#d05010" />
<rect x="750" y="267" width="1" height="1" fill="#e8a010" />
<rect x="658" y="268" width="1" height="1" fill="#c8c020" />
<rect x="816" y="268" width="1" height="1" fill="#e03010" />
<rect x="971" y="268" width="1" height="1" fill="#c8c020" />
<rect x="708" y="267" width="1" height="1" fill="#d05010" />
<rect x="876" y="269" width="1" height="1" fill="#e8a010" />
<rect x="750" y="268" width="1" height="1" fill="#e03010" />
<rect x="849" y="269" width="1" height="1" fill="#c8c020" />
<rect x="654" y="268" width="1" height="1" fill="#e03010" />
<rect x="757" y="268" width="1" height="1" fill="#e03010" />
<rect x="839" y="268" width="1" height="1" fill="#e8a010" />
<rect x="826" y="267" width="1" height="1" fill="#d05010" />
<rect x="955" y="268" width="1" height="1" fill="#e8a010" />
<rect x="1006" y="269" width="1" height="1" fill="#e03010" />
<rect x="754" y="268" width="1" height="1" fill="#c8c020" />
<rect x="639" y="268" width="1" height="1" fill="#d05010" />
<rect x="703" y="268" width="1" height="1" fill="#c8c020" />
<rect x="873" y="269" width="1" height="1" fill="#d05010" />
<rect x="696" y="268" width="1" height="1" fill="#e8a010" />
<rect x="994" y="267" width="1" height="1" fill="#c8c020" />
<rect x="975" y="268" width="1" height="1" fill="#e03010" />
<rect x="760" y="268" width="1" height="1" fill="#e8a010" />
<rect x="924" y="269" width="1" height="1" fill="#d05010" />
<rect x="974" y="269" width="1" height="1" fill="#e8a010" />
<rect x="693" y="268" width="1" height="1" fill="#e03010" />
<rect x="828" y="267" width="1" height="1" fill="#e8a010" />
<rect x="637" y="269" width="1" height="1" fill="#e8a010" />
<rect x="661" y="267" width="1" height="1" fill="#d05010" />
<rect x="689" y="268" width="1" height="1" fill="#d05010" />
<rect x="827" y="269" width="1" height="1" fill="#e8a010" />
<rect x="943" y="268" width="1" height="1" fill="#e8a010" />
<rect x="719" y="269" width="1" height="1" fill="#e8a010" />
<rect x="988" y="267" width="1" height="1" fill="#e03010" />
<rect x="629" y="269" width="1" height="1" fill="#c8c020" />
<rect x="657" y="269" width="1" height="1" fill="#e8a010" />
<rect x="989" y="268" width="1" height="1" fill="#d05010" />
<rect x="981" y="268" width="1" height="1" fill="#e03010" />
<rect x="750" y="269" width="1" height="1" fill="#e8a010" />
<rect x="783" y="268" width="1" height="1" fill="#c8c020" />
<rect x="918" y="267" width="1" height="1" fill="#e03010" />
<rect x="885" y="268" width="1" height="1" fill="#d05010" />
<rect x="774" y="268" width="1" height="1" fill="#e03010" />
<rect x="940" y="268" width="1" height="1" fill="#e8a010" />
<rect x="806" y="267" width="1" height="1" fill="#d05010" />
<rect x="961" y="269" width="1" height="1" fill="#e03010" />
<rect x="663" y="267" width="1" height="1" fill="#c8c020" />
<rect x="883" y="267" width="1" height="1" fill="#c8c020" />
<rect x="866" y="269" width="1" height="1" fill="#c8c020" />
<rect x="661" y="268" width="1" height="1" fill="#e03010" />
<rect x="649" y="269" width="1" height="1" fill="#e03010" />
<rect x="751" y="268" width="1" height="1" fill="#c8c020" />
<rect x="995" y="269" width="1" height="1" fill="#c8c020" />
<rect x="746" y="269" width="1" height="1" fill="#c8c020" />
<rect x="792" y="269" width="1" height="1" fill="#e8a010" />
<rect x="948" y="267" width="1" height="1" fill="#e03010" />
<rect x="870" y="268" width="1" height="1" fill="#c8c020" />
<rect x="815" y="268" width="1" height="1" fill="#c8c020" />
<rect x="945" y="268" width="1" height="1" fill="#e8a010" />
<rect x="871" y="269" width="1" height="1" fill="#c8c020" />
<rect x="781" y="269" width="1" height="1" fill="#e03010" />
<rect x="707" y="268" width="1" height="1" fill="#e8a010" />
<rect x="784" y="269" width="1" height="1" fill="#e8a010" />
<path d="M493.2,264.9 C495.0,273.2 499.3,317.3 504.0,315.0 C508.7,312.6 518.0,263.3 521.3,250.9 C524.5,238.6 521.5,235.7 523.5,241.0 C525.5,246.4 529.8,282.5 533.2,283.0 C536.6,283.6 540.6,244.2 544.0,244.4 C547.4,244.7 550.5,283.9 553.8,284.7 C557.0,285.6 560.4,250.3 563.5,249.4 C566.6,248.5 569.0,278.5 572.2,279.6 C575.5,280.8 580.1,258.4 583.0,256.2 C585.9,254.0 586.4,265.3 589.5,266.4 C592.6,267.6 597.7,262.1 601.5,262.9 C605.3,263.7 608.7,271.9 612.3,271.1 C615.9,270.3 619.6,259.0 623.1,257.9 C626.6,256.9 629.6,263.2 633.5,264.9 C637.4,266.6 644.3,267.5 646.5,268.0" fill="none" stroke="#1a1ad8" stroke-width="1.2" opacity="0.9"/>
<path d="M490.7,268.3 C492.5,275.6 496.8,313.9 501.5,311.9 C506.2,309.9 515.5,266.9 518.8,256.1 C522.0,245.4 519.0,242.9 521.0,247.5 C523.0,252.2 527.3,283.6 530.7,284.1 C534.1,284.6 538.1,250.2 541.5,250.5 C544.9,250.7 548.0,284.9 551.3,285.6 C554.5,286.3 557.9,255.5 561.0,254.8 C564.1,254.1 566.5,280.1 569.7,281.1 C573.0,282.1 577.6,262.7 580.5,260.7 C583.4,258.8 583.9,268.7 587.0,269.6 C590.1,270.6 595.2,265.9 599.0,266.5 C602.8,267.2 606.2,274.4 609.8,273.7 C613.4,273.0 617.1,263.1 620.6,262.2 C624.1,261.3 627.1,266.8 631.0,268.3 C634.9,269.8 641.8,270.6 644.0,271.0" fill="none" stroke="#2060e8" stroke-width="1.2" opacity="0.9"/>
<path d="M492.7,266.6 C494.5,273.1 498.8,307.2 503.5,305.4 C508.2,303.6 517.5,265.3 520.8,255.8 C524.0,246.3 521.0,244.0 523.0,248.1 C525.0,252.3 529.3,280.2 532.7,280.6 C536.1,281.1 540.1,250.5 543.5,250.8 C546.9,251.0 550.0,281.3 553.3,282.0 C556.5,282.6 559.9,255.3 563.0,254.6 C566.1,253.9 568.5,277.1 571.7,278.0 C575.0,278.9 579.6,261.6 582.5,259.9 C585.4,258.2 585.9,266.9 589.0,267.8 C592.1,268.7 597.2,264.4 601.0,265.0 C604.8,265.6 608.2,272.0 611.8,271.4 C615.4,270.8 619.1,262.0 622.6,261.2 C626.1,260.4 629.1,265.3 633.0,266.6 C636.9,267.9 643.8,268.6 646.0,269.0" fill="none" stroke="#10b8e0" stroke-width="1.3" opacity="0.9"/>
<path d="M490.2,270.4 C492.0,274.7 496.3,297.4 501.0,296.2 C505.7,295.0 515.0,269.6 518.3,263.2 C521.5,256.8 518.5,255.3 520.5,258.1 C522.5,260.8 526.8,279.5 530.2,279.8 C533.6,280.1 537.6,259.7 541.0,259.8 C544.4,260.0 547.5,280.2 550.8,280.6 C554.0,281.1 557.4,262.8 560.5,262.4 C563.6,262.0 566.0,277.4 569.2,278.0 C572.5,278.6 577.1,267.1 580.0,265.9 C582.9,264.8 583.4,270.6 586.5,271.2 C589.6,271.8 594.7,269.0 598.5,269.4 C602.3,269.8 605.7,274.0 609.3,273.6 C612.9,273.2 616.6,267.3 620.1,266.8 C623.6,266.3 626.6,269.5 630.5,270.4 C634.4,271.3 641.3,271.7 643.5,272.0" fill="none" stroke="#10b0e0" stroke-width="1.2" opacity="0.9"/>
<path d="M493.7,270.9 C495.5,276.6 499.8,306.4 504.5,304.8 C509.2,303.2 518.5,269.8 521.8,261.4 C525.0,253.1 522.0,251.1 524.0,254.7 C526.0,258.4 530.3,282.8 533.7,283.2 C537.1,283.6 541.1,256.8 544.5,257.0 C547.9,257.2 551.0,283.8 554.3,284.3 C557.5,284.9 560.9,261.0 564.0,260.4 C567.1,259.8 569.5,280.1 572.7,280.9 C576.0,281.6 580.6,266.5 583.5,265.0 C586.4,263.5 586.9,271.2 590.0,271.9 C593.1,272.7 598.2,269.0 602.0,269.5 C605.8,270.1 609.2,275.7 612.8,275.1 C616.4,274.5 620.1,266.9 623.6,266.2 C627.1,265.5 630.1,269.8 634.0,270.9 C637.9,272.0 644.8,272.6 647.0,273.0" fill="none" stroke="#10a8d8" stroke-width="1.1" opacity="0.8"/>
<path d="M491.7,267.8 C493.5,271.0 497.8,288.1 502.5,287.2 C507.2,286.3 516.5,267.2 519.8,262.4 C523.0,257.6 520.0,256.5 522.0,258.6 C524.0,260.6 528.3,274.6 531.7,274.8 C535.1,275.0 539.1,259.8 542.5,259.9 C545.9,260.0 549.0,275.2 552.3,275.5 C555.5,275.8 558.9,262.1 562.0,261.8 C565.1,261.5 567.5,273.1 570.7,273.5 C574.0,273.9 578.6,265.3 581.5,264.4 C584.4,263.6 584.9,268.0 588.0,268.4 C591.1,268.8 596.2,266.7 600.0,267.0 C603.8,267.3 607.2,270.5 610.8,270.2 C614.4,269.9 618.1,265.5 621.6,265.1 C625.1,264.7 628.1,267.2 632.0,267.8 C635.9,268.4 642.8,268.8 645.0,269.0" fill="none" stroke="#18c0c8" stroke-width="1.1" opacity="0.8"/>
<path d="M519.8,254.8 C521.2,253.5 525.6,247.9 528.5,247.2 C531.4,246.5 534.5,248.4 537.0,250.5 C539.5,252.6 542.5,258.4 543.6,260.0" fill="none" stroke="#10b8e0" stroke-width="1.2" />
<path d="M519.0,246.0 C519.5,244.9 520.2,241.9 522.0,239.6 C523.8,237.3 526.6,230.9 529.5,232.0 C532.4,233.1 536.5,241.0 539.3,246.0 C542.0,251.0 544.9,259.3 546.0,262.0" fill="none" stroke="#10a0e0" stroke-width="1.2" />
<path d="M491.7,274.3 C493.5,279.7 498.4,306.4 502.5,306.8 C506.6,307.2 514.2,281.6 516.5,276.5" fill="none" stroke="#10b0d0" stroke-width="1.2" />
<path d="M470.0,269.0 C473.6,268.8 486.3,262.8 491.7,268.0 C497.1,273.2 497.8,301.8 502.5,300.3 C507.2,298.8 516.5,266.9 519.8,259.0 C523.0,251.1 520.0,249.2 522.0,252.6 C524.0,256.1 528.3,279.3 531.7,279.7 C535.1,280.1 539.1,254.6 542.5,254.8 C545.9,255.0 549.0,280.3 552.3,280.8 C555.5,281.3 558.9,258.6 562.0,258.0 C565.1,257.4 567.5,276.8 570.7,277.5 C574.0,278.2 578.6,263.8 581.5,262.4 C584.4,261.0 584.9,268.3 588.0,269.0 C591.1,269.7 596.2,266.2 600.0,266.7 C603.8,267.2 607.2,272.5 610.8,272.0 C614.4,271.5 618.1,264.2 621.6,263.5 C625.1,262.8 628.1,266.9 632.0,268.0 C635.9,269.1 642.8,269.7 645.0,270.0" fill="none" stroke="#40e040" stroke-width="1.7" />
</g>
<g>
<rect x="18" y="49" width="1002" height="1" fill="#303030" />
<rect x="18" y="500" width="1002" height="1" fill="#303030" />
<rect x="18" y="49" width="1" height="452" fill="#303030" />
<rect x="1019" y="49" width="1" height="452" fill="#303030" />
<line x1="119.5" y1="50" x2="119.5" y2="499" stroke="#6a6a6a" stroke-width="1" stroke-dasharray="1 2"/>
<line x1="219.5" y1="50" x2="219.5" y2="499" stroke="#6a6a6a" stroke-width="1" stroke-dasharray="1 2"/>
<line x1="319.5" y1="50" x2="319.5" y2="499" stroke="#6a6a6a" stroke-width="1" stroke-dasharray="1 2"/>
<line x1="419.5" y1="50" x2="419.5" y2="499" stroke="#6a6a6a" stroke-width="1" stroke-dasharray="1 2"/>
<line x1="619.5" y1="50" x2="619.5" y2="499" stroke="#6a6a6a" stroke-width="1" stroke-dasharray="1 2"/>
<line x1="719.5" y1="50" x2="719.5" y2="499" stroke="#6a6a6a" stroke-width="1" stroke-dasharray="1 2"/>
<line x1="819.5" y1="50" x2="819.5" y2="499" stroke="#6a6a6a" stroke-width="1" stroke-dasharray="1 2"/>
<line x1="919.5" y1="50" x2="919.5" y2="499" stroke="#6a6a6a" stroke-width="1" stroke-dasharray="1 2"/>
<line x1="19" y1="105.5" x2="1019" y2="105.5" stroke="#6a6a6a" stroke-width="1" stroke-dasharray="1 2"/>
<line x1="19" y1="162.5" x2="1019" y2="162.5" stroke="#6a6a6a" stroke-width="1" stroke-dasharray="1 2"/>
<line x1="19" y1="218.5" x2="1019" y2="218.5" stroke="#6a6a6a" stroke-width="1" stroke-dasharray="1 2"/>
<line x1="19" y1="330.5" x2="1019" y2="330.5" stroke="#6a6a6a" stroke-width="1" stroke-dasharray="1 2"/>
<line x1="19" y1="387.5" x2="1019" y2="387.5" stroke="#6a6a6a" stroke-width="1" stroke-dasharray="1 2"/>
<line x1="19" y1="443.5" x2="1019" y2="443.5" stroke="#6a6a6a" stroke-width="1" stroke-dasharray="1 2"/>
<rect x="19" y="133" width="1" height="1" fill="#5a5a5a" />
<rect x="39" y="133" width="1" height="1" fill="#5a5a5a" />
<rect x="59" y="133" width="1" height="1" fill="#5a5a5a" />
<rect x="79" y="133" width="1" height="1" fill="#5a5a5a" />
<rect x="99" y="133" width="1" height="1" fill="#5a5a5a" />
<rect x="119" y="133" width="1" height="1" fill="#5a5a5a" />
<rect x="139" y="133" width="1" height="1" fill="#5a5a5a" />
<rect x="159" y="133" width="1" height="1" fill="#5a5a5a" />
<rect x="179" y="133" width="1" height="1" fill="#5a5a5a" />
<rect x="199" y="133" width="1" height="1" fill="#5a5a5a" />
<rect x="219" y="133" width="1" height="1" fill="#5a5a5a" />
<rect x="239" y="133" width="1" height="1" fill="#5a5a5a" />
<rect x="259" y="133" width="1" height="1" fill="#5a5a5a" />
<rect x="279" y="133" width="1" height="1" fill="#5a5a5a" />
<rect x="299" y="133" width="1" height="1" fill="#5a5a5a" />
<rect x="319" y="133" width="1" height="1" fill="#5a5a5a" />
<rect x="339" y="133" width="1" height="1" fill="#5a5a5a" />
<rect x="359" y="133" width="1" height="1" fill="#5a5a5a" />
<rect x="379" y="133" width="1" height="1" fill="#5a5a5a" />
<rect x="399" y="133" width="1" height="1" fill="#5a5a5a" />
<rect x="419" y="133" width="1" height="1" fill="#5a5a5a" />
<rect x="439" y="133" width="1" height="1" fill="#5a5a5a" />
<rect x="459" y="133" width="1" height="1" fill="#5a5a5a" />
<rect x="479" y="133" width="1" height="1" fill="#5a5a5a" />
<rect x="499" y="133" width="1" height="1" fill="#5a5a5a" />
<rect x="519" y="133" width="1" height="1" fill="#5a5a5a" />
<rect x="539" y="133" width="1" height="1" fill="#5a5a5a" />
<rect x="559" y="133" width="1" height="1" fill="#5a5a5a" />
<rect x="579" y="133" width="1" height="1" fill="#5a5a5a" />
<rect x="599" y="133" width="1" height="1" fill="#5a5a5a" />
<rect x="619" y="133" width="1" height="1" fill="#5a5a5a" />
<rect x="639" y="133" width="1" height="1" fill="#5a5a5a" />
<rect x="659" y="133" width="1" height="1" fill="#5a5a5a" />
<rect x="679" y="133" width="1" height="1" fill="#5a5a5a" />
<rect x="699" y="133" width="1" height="1" fill="#5a5a5a" />
<rect x="719" y="133" width="1" height="1" fill="#5a5a5a" />
<rect x="739" y="133" width="1" height="1" fill="#5a5a5a" />
<rect x="759" y="133" width="1" height="1" fill="#5a5a5a" />
<rect x="779" y="133" width="1" height="1" fill="#5a5a5a" />
<rect x="799" y="133" width="1" height="1" fill="#5a5a5a" />
<rect x="819" y="133" width="1" height="1" fill="#5a5a5a" />
<rect x="839" y="133" width="1" height="1" fill="#5a5a5a" />
<rect x="859" y="133" width="1" height="1" fill="#5a5a5a" />
<rect x="879" y="133" width="1" height="1" fill="#5a5a5a" />
<rect x="899" y="133" width="1" height="1" fill="#5a5a5a" />
<rect x="919" y="133" width="1" height="1" fill="#5a5a5a" />
<rect x="939" y="133" width="1" height="1" fill="#5a5a5a" />
<rect x="959" y="133" width="1" height="1" fill="#5a5a5a" />
<rect x="979" y="133" width="1" height="1" fill="#5a5a5a" />
<rect x="999" y="133" width="1" height="1" fill="#5a5a5a" />
<rect x="1019" y="133" width="1" height="1" fill="#5a5a5a" />
<rect x="19" y="415" width="1" height="1" fill="#5a5a5a" />
<rect x="39" y="415" width="1" height="1" fill="#5a5a5a" />
<rect x="59" y="415" width="1" height="1" fill="#5a5a5a" />
<rect x="79" y="415" width="1" height="1" fill="#5a5a5a" />
<rect x="99" y="415" width="1" height="1" fill="#5a5a5a" />
<rect x="119" y="415" width="1" height="1" fill="#5a5a5a" />
<rect x="139" y="415" width="1" height="1" fill="#5a5a5a" />
<rect x="159" y="415" width="1" height="1" fill="#5a5a5a" />
<rect x="179" y="415" width="1" height="1" fill="#5a5a5a" />
<rect x="199" y="415" width="1" height="1" fill="#5a5a5a" />
<rect x="219" y="415" width="1" height="1" fill="#5a5a5a" />
<rect x="239" y="415" width="1" height="1" fill="#5a5a5a" />
<rect x="259" y="415" width="1" height="1" fill="#5a5a5a" />
<rect x="279" y="415" width="1" height="1" fill="#5a5a5a" />
<rect x="299" y="415" width="1" height="1" fill="#5a5a5a" />
<rect x="319" y="415" width="1" height="1" fill="#5a5a5a" />
<rect x="339" y="415" width="1" height="1" fill="#5a5a5a" />
<rect x="359" y="415" width="1" height="1" fill="#5a5a5a" />
<rect x="379" y="415" width="1" height="1" fill="#5a5a5a" />
<rect x="399" y="415" width="1" height="1" fill="#5a5a5a" />
<rect x="419" y="415" width="1" height="1" fill="#5a5a5a" />
<rect x="439" y="415" width="1" height="1" fill="#5a5a5a" />
<rect x="459" y="415" width="1" height="1" fill="#5a5a5a" />
<rect x="479" y="415" width="1" height="1" fill="#5a5a5a" />
<rect x="499" y="415" width="1" height="1" fill="#5a5a5a" />
<rect x="519" y="415" width="1" height="1" fill="#5a5a5a" />
<rect x="539" y="415" width="1" height="1" fill="#5a5a5a" />
<rect x="559" y="415" width="1" height="1" fill="#5a5a5a" />
<rect x="579" y="415" width="1" height="1" fill="#5a5a5a" />
<rect x="599" y="415" width="1" height="1" fill="#5a5a5a" />
<rect x="619" y="415" width="1" height="1" fill="#5a5a5a" />
<rect x="639" y="415" width="1" height="1" fill="#5a5a5a" />
<rect x="659" y="415" width="1" height="1" fill="#5a5a5a" />
<rect x="679" y="415" width="1" height="1" fill="#5a5a5a" />
<rect x="699" y="415" width="1" height="1" fill="#5a5a5a" />
<rect x="719" y="415" width="1" height="1" fill="#5a5a5a" />
<rect x="739" y="415" width="1" height="1" fill="#5a5a5a" />
<rect x="759" y="415" width="1" height="1" fill="#5a5a5a" />
<rect x="779" y="415" width="1" height="1" fill="#5a5a5a" />
<rect x="799" y="415" width="1" height="1" fill="#5a5a5a" />
<rect x="819" y="415" width="1" height="1" fill="#5a5a5a" />
<rect x="839" y="415" width="1" height="1" fill="#5a5a5a" />
<rect x="859" y="415" width="1" height="1" fill="#5a5a5a" />
<rect x="879" y="415" width="1" height="1" fill="#5a5a5a" />
<rect x="899" y="415" width="1" height="1" fill="#5a5a5a" />
<rect x="919" y="415" width="1" height="1" fill="#5a5a5a" />
<rect x="939" y="415" width="1" height="1" fill="#5a5a5a" />
<rect x="959" y="415" width="1" height="1" fill="#5a5a5a" />
<rect x="979" y="415" width="1" height="1" fill="#5a5a5a" />
<rect x="999" y="415" width="1" height="1" fill="#5a5a5a" />
<rect x="1019" y="415" width="1" height="1" fill="#5a5a5a" />
<rect x="519" y="50" width="1" height="450" fill="#8a8a8a" />
<rect x="19" y="274" width="1000" height="1" fill="#5a5a5a" style="mix-blend-mode:screen"/>
<rect x="518" y="60" width="4" height="1" fill="#8a8a8a" />
<rect x="518" y="72" width="4" height="1" fill="#8a8a8a" />
<rect x="518" y="83" width="4" height="1" fill="#8a8a8a" />
<rect x="518" y="94" width="4" height="1" fill="#8a8a8a" />
<rect x="518" y="105" width="4" height="1" fill="#8a8a8a" />
<rect x="518" y="116" width="4" height="1" fill="#8a8a8a" />
<rect x="518" y="128" width="4" height="1" fill="#8a8a8a" />
<rect x="518" y="139" width="4" height="1" fill="#8a8a8a" />
<rect x="518" y="150" width="4" height="1" fill="#8a8a8a" />
<rect x="518" y="162" width="4" height="1" fill="#8a8a8a" />
<rect x="518" y="173" width="4" height="1" fill="#8a8a8a" />
<rect x="518" y="184" width="4" height="1" fill="#8a8a8a" />
<rect x="518" y="195" width="4" height="1" fill="#8a8a8a" />
<rect x="518" y="206" width="4" height="1" fill="#8a8a8a" />
<rect x="518" y="218" width="4" height="1" fill="#8a8a8a" />
<rect x="518" y="229" width="4" height="1" fill="#8a8a8a" />
<rect x="518" y="240" width="4" height="1" fill="#8a8a8a" />
<rect x="518" y="252" width="4" height="1" fill="#8a8a8a" />
<rect x="518" y="263" width="4" height="1" fill="#8a8a8a" />
<rect x="518" y="274" width="4" height="1" fill="#8a8a8a" />
<rect x="518" y="285" width="4" height="1" fill="#8a8a8a" />
<rect x="518" y="296" width="4" height="1" fill="#8a8a8a" />
<rect x="518" y="308" width="4" height="1" fill="#8a8a8a" />
<rect x="518" y="319" width="4" height="1" fill="#8a8a8a" />
<rect x="518" y="330" width="4" height="1" fill="#8a8a8a" />
<rect x="518" y="342" width="4" height="1" fill="#8a8a8a" />
<rect x="518" y="353" width="4" height="1" fill="#8a8a8a" />
<rect x="518" y="364" width="4" height="1" fill="#8a8a8a" />
<rect x="518" y="375" width="4" height="1" fill="#8a8a8a" />
<rect x="518" y="386" width="4" height="1" fill="#8a8a8a" />
<rect x="518" y="398" width="4" height="1" fill="#8a8a8a" />
<rect x="518" y="409" width="4" height="1" fill="#8a8a8a" />
<rect x="518" y="420" width="4" height="1" fill="#8a8a8a" />
<rect x="518" y="432" width="4" height="1" fill="#8a8a8a" />
<rect x="518" y="443" width="4" height="1" fill="#8a8a8a" />
<rect x="518" y="454" width="4" height="1" fill="#8a8a8a" />
<rect x="518" y="465" width="4" height="1" fill="#8a8a8a" />
<rect x="518" y="476" width="4" height="1" fill="#8a8a8a" />
<rect x="518" y="488" width="4" height="1" fill="#8a8a8a" />
<rect x="19" y="272" width="1" height="5" fill="#6a6a6a" style="mix-blend-mode:screen"/>
<rect x="39" y="272" width="1" height="5" fill="#6a6a6a" style="mix-blend-mode:screen"/>
<rect x="59" y="272" width="1" height="5" fill="#6a6a6a" style="mix-blend-mode:screen"/>
<rect x="79" y="272" width="1" height="5" fill="#6a6a6a" style="mix-blend-mode:screen"/>
<rect x="99" y="272" width="1" height="5" fill="#6a6a6a" style="mix-blend-mode:screen"/>
<rect x="119" y="272" width="1" height="5" fill="#6a6a6a" style="mix-blend-mode:screen"/>
<rect x="139" y="272" width="1" height="5" fill="#6a6a6a" style="mix-blend-mode:screen"/>
<rect x="159" y="272" width="1" height="5" fill="#6a6a6a" style="mix-blend-mode:screen"/>
<rect x="179" y="272" width="1" height="5" fill="#6a6a6a" style="mix-blend-mode:screen"/>
<rect x="199" y="272" width="1" height="5" fill="#6a6a6a" style="mix-blend-mode:screen"/>
<rect x="219" y="272" width="1" height="5" fill="#6a6a6a" style="mix-blend-mode:screen"/>
<rect x="239" y="272" width="1" height="5" fill="#6a6a6a" style="mix-blend-mode:screen"/>
<rect x="259" y="272" width="1" height="5" fill="#6a6a6a" style="mix-blend-mode:screen"/>
<rect x="279" y="272" width="1" height="5" fill="#6a6a6a" style="mix-blend-mode:screen"/>
<rect x="299" y="272" width="1" height="5" fill="#6a6a6a" style="mix-blend-mode:screen"/>
<rect x="319" y="272" width="1" height="5" fill="#6a6a6a" style="mix-blend-mode:screen"/>
<rect x="339" y="272" width="1" height="5" fill="#6a6a6a" style="mix-blend-mode:screen"/>
<rect x="359" y="272" width="1" height="5" fill="#6a6a6a" style="mix-blend-mode:screen"/>
<rect x="379" y="272" width="1" height="5" fill="#6a6a6a" style="mix-blend-mode:screen"/>
<rect x="399" y="272" width="1" height="5" fill="#6a6a6a" style="mix-blend-mode:screen"/>
<rect x="419" y="272" width="1" height="5" fill="#6a6a6a" style="mix-blend-mode:screen"/>
<rect x="439" y="272" width="1" height="5" fill="#6a6a6a" style="mix-blend-mode:screen"/>
<rect x="459" y="272" width="1" height="5" fill="#6a6a6a" style="mix-blend-mode:screen"/>
<rect x="479" y="272" width="1" height="5" fill="#6a6a6a" style="mix-blend-mode:screen"/>
<rect x="499" y="272" width="1" height="5" fill="#6a6a6a" style="mix-blend-mode:screen"/>
<rect x="519" y="272" width="1" height="5" fill="#6a6a6a" style="mix-blend-mode:screen"/>
<rect x="539" y="272" width="1" height="5" fill="#6a6a6a" style="mix-blend-mode:screen"/>
<rect x="559" y="272" width="1" height="5" fill="#6a6a6a" style="mix-blend-mode:screen"/>
<rect x="579" y="272" width="1" height="5" fill="#6a6a6a" style="mix-blend-mode:screen"/>
<rect x="599" y="272" width="1" height="5" fill="#6a6a6a" style="mix-blend-mode:screen"/>
<rect x="619" y="272" width="1" height="5" fill="#6a6a6a" style="mix-blend-mode:screen"/>
<rect x="639" y="272" width="1" height="5" fill="#6a6a6a" style="mix-blend-mode:screen"/>
<rect x="659" y="272" width="1" height="5" fill="#6a6a6a" style="mix-blend-mode:screen"/>
<rect x="679" y="272" width="1" height="5" fill="#6a6a6a" style="mix-blend-mode:screen"/>
<rect x="699" y="272" width="1" height="5" fill="#6a6a6a" style="mix-blend-mode:screen"/>
<rect x="719" y="272" width="1" height="5" fill="#6a6a6a" style="mix-blend-mode:screen"/>
<rect x="739" y="272" width="1" height="5" fill="#6a6a6a" style="mix-blend-mode:screen"/>
<rect x="759" y="272" width="1" height="5" fill="#6a6a6a" style="mix-blend-mode:screen"/>
<rect x="779" y="272" width="1" height="5" fill="#6a6a6a" style="mix-blend-mode:screen"/>
<rect x="799" y="272" width="1" height="5" fill="#6a6a6a" style="mix-blend-mode:screen"/>
<rect x="819" y="272" width="1" height="5" fill="#6a6a6a" style="mix-blend-mode:screen"/>
<rect x="839" y="272" width="1" height="5" fill="#6a6a6a" style="mix-blend-mode:screen"/>
<rect x="859" y="272" width="1" height="5" fill="#6a6a6a" style="mix-blend-mode:screen"/>
<rect x="879" y="272" width="1" height="5" fill="#6a6a6a" style="mix-blend-mode:screen"/>
<rect x="899" y="272" width="1" height="5" fill="#6a6a6a" style="mix-blend-mode:screen"/>
<rect x="919" y="272" width="1" height="5" fill="#6a6a6a" style="mix-blend-mode:screen"/>
<rect x="939" y="272" width="1" height="5" fill="#6a6a6a" style="mix-blend-mode:screen"/>
<rect x="959" y="272" width="1" height="5" fill="#6a6a6a" style="mix-blend-mode:screen"/>
<rect x="979" y="272" width="1" height="5" fill="#6a6a6a" style="mix-blend-mode:screen"/>
<rect x="999" y="272" width="1" height="5" fill="#6a6a6a" style="mix-blend-mode:screen"/>
<rect x="1019" y="272" width="1" height="5" fill="#6a6a6a" style="mix-blend-mode:screen"/>
</g>
<path d="M2 484 H15 L16 485 V497 L15 498 H10 L8.5 500 L7 498 H2 L1 497 V485 Z" fill="#ffff00" shape-rendering="auto"/>
<text x="2" y="495.5" font-size="10.5" fill="#000" text-anchor="start" font-weight="normal"  textLength="10.5" lengthAdjust="spacingAndGlyphs" >C1</text>
<path d="M1010 260 L1019 251 L1019 269 Z" fill="#f0f000"/>
<path d="M509.5 50.5 L529.5 50.5 L519.5 60 Z" fill="#1e78e6"/>
<path d="M509.5 50.5 L519.5 60 L529.5 50.5" fill="none" stroke="#8a80ff" stroke-width="1" stroke-dasharray="1 1" shape-rendering="auto"/>
<rect x="0" y="501" width="1024" height="30" fill="#000" />
<rect x="0" y="502" width="1023" height="29" fill="#262626" />
<rect x="1" y="503" width="1021" height="27" fill="#161616" />
<rect x="4" y="507" width="127" height="19" fill="#1e1e1e" />
<text x="11.2" y="522" font-size="15" fill="#ffff00" text-anchor="start" font-weight="normal" stroke="#1e1e1e" stroke-width="0.15" textLength="40.12" lengthAdjust="spacingAndGlyphs" >Pk-Pk</text>
<rect x="132" y="507" width="116" height="19" fill="#1e1e1e" />
<text x="139.94" y="522" font-size="15" fill="#ffffff" text-anchor="start" font-weight="normal" stroke="#1e1e1e" stroke-width="0.2" textLength="73.91" lengthAdjust="spacingAndGlyphs" >18.9167mV</text>
<rect x="250" y="507" width="127" height="19" fill="#1e1e1e" />
<text x="258" y="522" font-size="15" fill="#ffff00" text-anchor="start" font-weight="normal" stroke="#1e1e1e" stroke-width="0.15"  >Freq</text>
<rect x="378" y="507" width="117" height="19" fill="#1e1e1e" />
<text x="386" y="522" font-size="15" fill="#ffffff" text-anchor="start" font-weight="normal" stroke="#1e1e1e" stroke-width="0.15"  >***</text>
<rect x="496" y="507" width="126" height="19" fill="#1e1e1e" />
<text x="503.05" y="522" font-size="15" fill="#ffff00" text-anchor="start" font-weight="normal" stroke="#1e1e1e" stroke-width="0.15" textLength="46.85" lengthAdjust="spacingAndGlyphs" >Median</text>
<rect x="623" y="507" width="118" height="19" fill="#1e1e1e" />
<text x="631.24" y="522" font-size="15" fill="#ffffff" text-anchor="start" font-weight="normal" stroke="#1e1e1e" stroke-width="0.2" textLength="76.98" lengthAdjust="spacingAndGlyphs" >5.1169583V</text>
<rect x="742" y="507" width="126" height="19" fill="#1e1e1e" />
<text x="749.23" y="522" font-size="15" fill="#ffff00" text-anchor="start" font-weight="normal" stroke="#1e1e1e" stroke-width="0.15" textLength="37.15" lengthAdjust="spacingAndGlyphs" >Stdev</text>
<rect x="869" y="507" width="117" height="19" fill="#1e1e1e" />
<text x="878.4" y="522" font-size="15" fill="#ffffff" text-anchor="start" font-weight="normal" stroke="#1e1e1e" stroke-width="0.2" textLength="81.27" lengthAdjust="spacingAndGlyphs" >2.413655mV</text>
<rect x="989" y="507" width="30" height="20" fill="#2c2c2c" />
<path d="M995 511 L1013 523 M1013 511 L995 523" stroke="#474747" stroke-width="1.5"/>
<rect x="0" y="531" width="1024" height="69" fill="#151515" />
<rect x="0" y="531" width="1024" height="2" fill="#0c0c0c" />
<rect x="4" y="537" width="116" height="59" fill="#1e78e6" />
<rect x="6" y="539" width="112" height="55" fill="#3c3c3c" />
<rect x="6" y="539" width="38" height="17" rx="2" fill="#000"/>
<rect x="46" y="539" width="72" height="17" rx="2" fill="#222"/>
<rect x="78" y="539" width="40" height="17" fill="#1a1a1a"/>
<text x="13.82" y="553" font-size="17" fill="#ffff00" text-anchor="start" font-weight="normal" stroke="#000" stroke-width="0.15" textLength="19.23" lengthAdjust="spacingAndGlyphs" >C1</text>
<text x="77.79" y="553" font-size="15" fill="#ffff00" text-anchor="start" font-weight="normal" stroke="#1a1a1a" stroke-width="0.15" textLength="38.89" lengthAdjust="spacingAndGlyphs" >DC1M</text>
<text x="6.06" y="570" font-size="14.5" fill="#ffffff" text-anchor="start" font-weight="normal" stroke="#3c3c3c" stroke-width="0.2" textLength="16.6" lengthAdjust="spacingAndGlyphs" >1X</text>
<text x="63.5" y="570" font-size="14.5" fill="#ffffff" text-anchor="start" font-weight="normal" stroke="#3c3c3c" stroke-width="0.2" textLength="53.0" lengthAdjust="spacingAndGlyphs" >20.0mV/</text>
<text x="7.0" y="589" font-size="14.5" fill="#ffffff" text-anchor="start" font-weight="normal" stroke="#3c3c3c" stroke-width="0.2" textLength="25.6" lengthAdjust="spacingAndGlyphs" >20M</text>
<text x="74.9" y="589" font-size="14.5" fill="#ffffff" text-anchor="start" font-weight="normal" stroke="#3c3c3c" stroke-width="0.2" textLength="41.34" lengthAdjust="spacingAndGlyphs" >-5.12V</text>
<rect x="124.5" y="537.5" width="114" height="58" fill="#121212" stroke="#707070" stroke-width="1" stroke-dasharray="1 2"/>
<rect x="153" y="566" width="57" height="1" fill="#707070" />
<rect x="182" y="550" width="1" height="33" fill="#707070" />
<rect x="658" y="537" width="2" height="59" fill="#222" />
<rect x="663" y="537" width="140" height="59" rx="2" fill="#3c3c3c"/>
<rect x="663" y="537" width="140" height="19" fill="#1e1e1e"/>
<text x="668.2" y="552" font-size="15" fill="#ffffff" text-anchor="start" font-weight="normal" stroke="#1e1e1e" stroke-width="0.2" textLength="61.8" lengthAdjust="spacingAndGlyphs" >Timebase</text>
<text x="666.0" y="570" font-size="15" fill="#ffffff" text-anchor="start" font-weight="normal" stroke="#3c3c3c" stroke-width="0.2" textLength="34.72" lengthAdjust="spacingAndGlyphs" >0.00s</text>
<text x="739.3" y="570" font-size="15" fill="#ffffff" text-anchor="start" font-weight="normal" stroke="#3c3c3c" stroke-width="0.2" textLength="60.76" lengthAdjust="spacingAndGlyphs" >200ns/div</text>
<text x="666.0" y="589" font-size="15" fill="#ffffff" text-anchor="start" font-weight="normal" stroke="#3c3c3c" stroke-width="0.2" textLength="53.34" lengthAdjust="spacingAndGlyphs" >4.00kpts</text>
<text x="731.6" y="589" font-size="15" fill="#ffffff" text-anchor="start" font-weight="normal" stroke="#3c3c3c" stroke-width="0.2" textLength="67.8" lengthAdjust="spacingAndGlyphs" >2.00GSa/s</text>
<rect x="807" y="537" width="133" height="59" rx="2" fill="#3c3c3c"/>
<rect x="807" y="537" width="133" height="19" fill="#1e1e1e"/>
<rect x="896" y="538" width="18" height="17" fill="#141414" />
<rect x="917" y="538" width="20" height="17" fill="#141414" />
<text x="811.2" y="552" font-size="15" fill="#ffff00" text-anchor="start" font-weight="normal" stroke="#1e1e1e" stroke-width="0.15" textLength="44.27" lengthAdjust="spacingAndGlyphs" >Trigger</text>
<text x="896.5" y="552" font-size="15" fill="#ffff00" text-anchor="start" font-weight="normal" stroke="#141414" stroke-width="0.15" textLength="16.66" lengthAdjust="spacingAndGlyphs" >C1</text>
<text x="916.04" y="552" font-size="15" fill="#ffff00" text-anchor="start" font-weight="normal" stroke="#141414" stroke-width="0.15" textLength="20.81" lengthAdjust="spacingAndGlyphs" >DC</text>
<text x="810.4" y="570" font-size="15" fill="#ffffff" text-anchor="start" font-weight="normal" stroke="#3c3c3c" stroke-width="0.2" textLength="30.46" lengthAdjust="spacingAndGlyphs" >Auto</text>
<text x="894.16" y="570" font-size="15" fill="#ffffff" text-anchor="start" font-weight="normal" stroke="#3c3c3c" stroke-width="0.2" textLength="40.85" lengthAdjust="spacingAndGlyphs" >5.12V</text>
<text x="809.31" y="589" font-size="15" fill="#ffffff" text-anchor="start" font-weight="normal" stroke="#3c3c3c" stroke-width="0.2" textLength="38.04" lengthAdjust="spacingAndGlyphs" >Edge</text>
<text x="892.74" y="589" font-size="15" fill="#ffffff" text-anchor="start" font-weight="normal" stroke="#3c3c3c" stroke-width="0.2" textLength="44.19" lengthAdjust="spacingAndGlyphs" >Rising</text>
<rect x="944" y="537" width="80" height="59" fill="#1e1e1e" />
<g shape-rendering="auto" fill="none" stroke="#a8a8a8" stroke-width="1.2">
<path d="M983.4 543.5 V554.6 M980 548.6 V550 L983.4 553 M987.8 546.2 V549 L983.4 551.8"/>
<path d="M981.9 543.9 L983.4 541.4 L984.9 543.9 Z" fill="#a8a8a8"/>
<circle cx="983.4" cy="554.8" r="1.2" fill="#a8a8a8"/>
<circle cx="980" cy="548" r="0.9" fill="#a8a8a8"/>
<rect x="987" y="545.1" width="1.6" height="1.6" fill="#a8a8a8" stroke="none"/>
<rect x="1000.6" y="541.4" width="6" height="5"/>
<path d="M1003.6 546.4 V548.6 M996 548.6 H1011 M999.4 548.6 V551.4 M1007.6 548.6 V551.4"/>
<rect x="997.4" y="551.6" width="4.4" height="4.2"/>
<rect x="1005.6" y="551.6" width="4.4" height="4.2"/>
</g>
</svg>
</body></html>
